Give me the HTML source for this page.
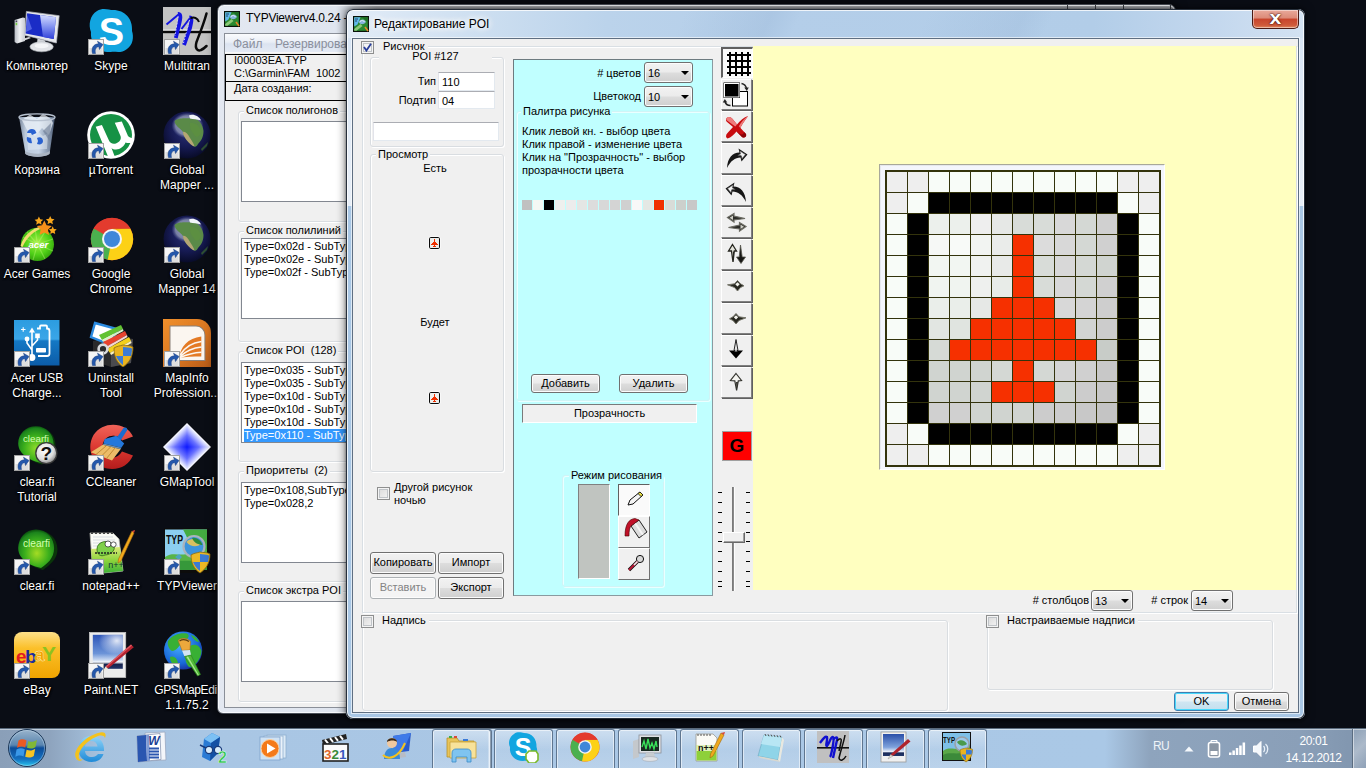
<!DOCTYPE html>
<html lang="ru">
<head>
<meta charset="utf-8">
<title>Редактирование POI</title>
<style>
*{box-sizing:border-box;margin:0;padding:0}
html,body{width:1366px;height:768px;overflow:hidden;background:#0a0d15}
body{position:relative;font-family:"Liberation Sans",sans-serif;font-size:11px;color:#000;line-height:13px}
.a{position:absolute}
.t{position:absolute;white-space:nowrap;line-height:13px;font-size:11px}
.r{text-align:right}
.c{text-align:center}
/* desktop icons */
.ico{position:absolute;width:76px;text-align:center;color:#fff;font-size:12px;line-height:15px;text-shadow:0 1px 2px #000,0 0 3px #000,1px 1px 1px #000;letter-spacing:0}
.ico svg{text-shadow:none;display:block;margin:0 auto 4px auto;width:48px;height:48px}
/* win controls */
.gb{position:absolute;border:1px solid #d9dde1;border-radius:3px;box-shadow:inset 1px 1px 0 #fff,1px 1px 0 #fff}
.gbl{position:absolute;background:#f0f0f0;padding:0 2px;white-space:nowrap;line-height:13px}
.inp{position:absolute;background:#fff;border:1px solid #e3e9ef;border-top-color:#abadb3;border-left-color:#e2e3ea;line-height:16px;padding:1px 0 0 3px}
.btn{position:absolute;border:1px solid #707070;border-radius:3px;background:linear-gradient(#f2f2f2 0,#ebebeb 48%,#dddddd 52%,#cfcfcf 100%);box-shadow:inset 0 0 0 1px #fcfcfc;text-align:center;line-height:19px;white-space:nowrap}
.btn.dis{color:#838383;border-color:#adb2b5;background:#f4f4f4}
.btn.def{border-color:#3c7fb1;box-shadow:inset 0 0 0 1px #48d8fb;background:linear-gradient(#f2f2f2 0,#e6f0f6 48%,#cfe6f2 52%,#c4dfee 100%)}
.cmb{position:absolute;border:1px solid #707070;border-radius:3px;background:linear-gradient(#f2f2f2 0,#ebebeb 48%,#dddddd 52%,#cfcfcf 100%);box-shadow:inset 0 0 0 1px #fcfcfc;line-height:20px;padding-left:3px}
.cmb:after{content:"";position:absolute;right:3px;top:8px;border:4px solid transparent;border-top:4px solid #000;border-bottom:none}
.chk{position:absolute;width:13px;height:13px;border:1px solid #8e8f8f;background:linear-gradient(135deg,#d8d8d8,#f6f6f6);box-shadow:inset 0 0 0 1px #f4f4f4,inset 0 0 0 2px #c0c4c8}
.lb{position:absolute;background:#fff;border:1px solid #828790;overflow:hidden;padding:1px 0 0 2px;white-space:nowrap;line-height:13px}
.tb{position:absolute;left:721px;width:31px;height:31px;background:#f0f0f0;border:1px solid;border-color:#fff #808080 #808080 #fff;box-shadow:1px 1px 0 #606060}
.tb svg{position:absolute;left:0;top:0;width:29px;height:29px}
.sw i{margin-right:1px}
.tk{position:absolute;height:40px;top:728px}
</style>
</head>
<body>
<!-- desktop icons -->
<div class="ico" style="left:-1px;top:7px"><svg viewBox="0 0 48 48"><defs><linearGradient id="cmpA1" x1="0" y1="0" x2="0" y2="1"><stop offset="0" stop-color="#d4dcff"/><stop offset=".5" stop-color="#8090f0"/><stop offset="1" stop-color="#3040d8"/></linearGradient><linearGradient id="cmpB1" x1="0" y1="0" x2="1" y2="0"><stop offset="0" stop-color="#b8bcc4"/><stop offset=".5" stop-color="#f0f2f4"/><stop offset="1" stop-color="#c8ccd2"/></linearGradient></defs><path d="M1.600 13 L10 10.500 L12 11 L12 34 L4 36.500 L1.600 35Z" fill="url(#cmpB1)"/><rect x="2.600" y="13.500" width="1.600" height="1.600" fill="#445"/><rect x="2.600" y="15.800" width="1.600" height="2.400" fill="#7c4"/><path d="M9 32 L16 30 L18 31 L10 34Z" fill="#d4d6da"/><path d="M13.400 4.400 L46.200 8.700 L43.400 36 L11.800 28.200Z" fill="#e6e8ec" stroke="#b4b8c0" stroke-width=".7"/><path d="M14.100 6.300 L43 10.200 L40.700 32.100 L12.600 26.600Z" fill="#1a2cc6"/><path d="M27 8 L43 10.200 L40.700 32.100 L30 30Z" fill="url(#cmpA1)"/><path d="M14.100 8 L19 22 L13 25Z" fill="#6a7af0" opacity=".7"/><path d="M24.500 31.500 L32 33.500 L33 38 L24 37Z" fill="#d0d3d8"/><ellipse cx="28.600" cy="39.800" rx="11.700" ry="5" fill="#e2e4e8" stroke="#b4b8be" stroke-width=".6"/><ellipse cx="28.600" cy="38.800" rx="7" ry="2.400" fill="#f4f5f7"/></svg>Компьютер</div>
<div class="ico" style="left:73px;top:7px"><svg viewBox="0 0 48 48"><path d="M10 4 C16 0 22 3 26 3 C38 3 46 12 45 24 C47 30 46 38 40 42 C34 47 28 44 24 45 C12 46 3 37 4 25 C1 18 3 8 10 4Z" fill="#12a5e0"/><text x="24.500" y="37.500" font-family="Liberation Sans,sans-serif" font-weight="bold" font-size="38" text-anchor="middle" fill="#fff">S</text><g><rect x="1.500" y="32.500" width="15" height="15" fill="#f6f6f6" stroke="#a2a2a2"/><rect x="2.500" y="41" width="13" height="6" fill="#dedede"/><path d="M5.500 46.500 C4 41 6.500 37 11.500 36.800 L10.500 34.200 L16 37.500 L12.500 42.500 L11.800 39.800 C9 40 7.500 42.500 8.500 46.500Z" fill="#2458ac" stroke="#183c7c" stroke-width=".5"/></g></svg>Skype</div>
<div class="ico" style="left:149px;top:7px"><svg viewBox="0 0 48 48"><rect x="0" y="0" width="48" height="48" fill="#c3c3c3"/><rect x="0" y="22.500" width="48" height="1.300" fill="#ececec"/><rect x="0" y="23.800" width="48" height="2.400" fill="#0a0a0a"/><path d="M3.500 17.500 L15.500 7.500" fill="none" stroke="#1414e0" stroke-width="2"/><path d="M15 7 C18.500 6.500 17.500 12 16 18 L12.800 31" fill="none" stroke="#1414e0" stroke-width="3.800" stroke-linejoin="round"/><path d="M18.500 22 L27 11" fill="none" stroke="#1414e0" stroke-width="2"/><path d="M26.500 10.500 C29.500 10 28.500 15 27 21 L21 38" fill="none" stroke="#1414e0" stroke-width="3.800" stroke-linejoin="round"/><path d="M15 9.500 L12 29 M26.500 13 L20.500 36" fill="none" stroke="#c8c8ff" stroke-width="1" stroke-dasharray="1.600 1.600"/><path d="M27.500 11.500 C31 9.500 34.500 11 36 15" fill="none" stroke="#0a0a0a" stroke-width="2"/><path d="M43.500 6.500 C41 16 37 26 33.500 35 C31.500 42 35 44.500 38 43 C40.500 42 42 40.500 43.500 39" fill="none" stroke="#0a0a0a" stroke-width="2.500" stroke-linecap="round"/><g><rect x="1.500" y="32.500" width="15" height="15" fill="#f6f6f6" stroke="#a2a2a2"/><rect x="2.500" y="41" width="13" height="6" fill="#dedede"/><path d="M5.500 46.500 C4 41 6.500 37 11.500 36.800 L10.500 34.200 L16 37.500 L12.500 42.500 L11.800 39.800 C9 40 7.500 42.500 8.500 46.500Z" fill="#2458ac" stroke="#183c7c" stroke-width=".5"/></g></svg>Multitran</div>
<div class="ico" style="left:-1px;top:111px"><svg viewBox="0 0 48 48"><defs><linearGradient id="binA4" x1="0" x2="1"><stop offset="0" stop-color="#7a889c"/><stop offset=".18" stop-color="#bccadc"/><stop offset=".55" stop-color="#c6d4e6"/><stop offset=".85" stop-color="#7c8ca4"/><stop offset="1" stop-color="#46546c"/></linearGradient></defs><path d="M6 6 L42 6 L36.500 43 C31 46.500 18 46.500 12.500 43 Z" fill="url(#binA4)"/><path d="M12.500 43 C18 46.500 31 46.500 36.500 43 L37 40 C31 43.500 18 43.500 12 40Z" fill="#aab4c2"/><path d="M9 9 L17 3.500 L24 8 L30 2.500 L38 8 L40 12 L36 24 L29 17 L22 25 L14 19Z" fill="#eef4fa" opacity=".7"/><path d="M14 22 L22 18 L30 25 L35 22 L34 38 L15 39Z" fill="#e6eef8" opacity=".5"/><path d="M30 20 L38 12 L36.500 30Z" fill="#6c7c94" opacity=".6"/><ellipse cx="24" cy="6.200" rx="18" ry="3.400" fill="none" stroke="#b8c2d0" stroke-width="1.300"/><path d="M14 22 C15 18 19 17 22 19 L23.500 22 L19 24 L18 22 Z M24 27 C27 25 30 27 30 30 C30 33 27 34 24 33 L25 30Z M14 26 L18 27 L19 32 C16 33 13 30 14 26Z" fill="#2a62d0"/></svg>Корзина</div>
<div class="ico" style="left:73px;top:111px"><svg viewBox="0 0 48 48"><circle cx="24" cy="24" r="23.800" fill="#fff"/><circle cx="24" cy="24" r="21" fill="#169245"/><path d="M8.700 15.700 L14.900 14.100 L21.500 28.600 C23 32.500 26 33.500 29 32.500 C33 31 34.500 28 33.500 25 L27.800 11.800 L34.800 10.600 L41 25 C42.500 26.500 44 27 45.800 27 L45 31.700 C42 32.500 40 32 38.500 31.500 C37.500 35 33 38.500 29 38.500 C27 38.500 25.500 38 24.500 37 L27.800 45.800 L20.800 45 Z" fill="#fff"/><g><rect x="1.500" y="32.500" width="15" height="15" fill="#f6f6f6" stroke="#a2a2a2"/><rect x="2.500" y="41" width="13" height="6" fill="#dedede"/><path d="M5.500 46.500 C4 41 6.500 37 11.500 36.800 L10.500 34.200 L16 37.500 L12.500 42.500 L11.800 39.800 C9 40 7.500 42.500 8.500 46.500Z" fill="#2458ac" stroke="#183c7c" stroke-width=".5"/></g></svg>µTorrent</div>
<div class="ico" style="left:149px;top:111px"><svg viewBox="0 0 48 48"><defs><radialGradient id="glbA6" cx=".5" cy=".4" r=".6"><stop offset="0" stop-color="#2c3278"/><stop offset=".6" stop-color="#161a52"/><stop offset="1" stop-color="#080b28"/></radialGradient><radialGradient id="glbB6" cx=".5" cy=".5" r=".5"><stop offset="0" stop-color="#a8b0cc" stop-opacity=".95"/><stop offset=".75" stop-color="#8890b0" stop-opacity=".85"/><stop offset="1" stop-color="#5860a0" stop-opacity="0"/></radialGradient></defs><circle cx="24" cy="24" r="23.500" fill="url(#glbA6)"/><ellipse cx="24.500" cy="14.500" rx="16" ry="13" fill="url(#glbB6)"/><path d="M11.500 10 C16 6 24 8 30 7 C36 8 40 14 40.500 20 C40.500 26 38 30 35 33 C33 37 31 36 28 33 C24 30 21 26 20 21 C17 17 12 15 11.500 10Z" fill="#5a8a48"/><path d="M27 12 C32 11 37 15 38 21 C37 25 34 27 32 25 C29 21 26 17 27 12Z" fill="#5c9040" opacity=".8"/><path d="M20 21 C22 20 25 23 27 27 C29 30 31 33 31.500 35.500 C29 35 26 32 23.500 29 C21.500 26 20 24 20 21Z" fill="#b4a674"/><path d="M26 4.500 C30 2.500 36 5 38 9.500 C34 8.500 30 8 27 7.500Z" fill="#f2f6fa"/><path d="M38 38 L45 31 L44 35 L39 40Z" fill="#3c6a30" opacity=".7"/><g><rect x="1.500" y="32.500" width="15" height="15" fill="#f6f6f6" stroke="#a2a2a2"/><rect x="2.500" y="41" width="13" height="6" fill="#dedede"/><path d="M5.500 46.500 C4 41 6.500 37 11.500 36.800 L10.500 34.200 L16 37.500 L12.500 42.500 L11.800 39.800 C9 40 7.500 42.500 8.500 46.500Z" fill="#2458ac" stroke="#183c7c" stroke-width=".5"/></g></svg>Global<br>Mapper ...</div>
<div class="ico" style="left:-1px;top:215px"><svg viewBox="0 0 48 48"><defs><radialGradient id="acgA7" cx=".5" cy=".45" r=".6"><stop offset="0" stop-color="#a8f044"/><stop offset=".6" stop-color="#50d018"/><stop offset="1" stop-color="#2c9808"/></radialGradient></defs><circle cx="24.400" cy="29.300" r="16.600" fill="url(#acgA7)"/><path d="M24.400 29.300 L10 22 M24.400 29.300 L14 17 M24.400 29.300 L22 13 M24.400 29.300 L33 15 M24.400 29.300 L40 24 M24.400 29.300 L40 36 M24.400 29.300 L32 44 M24.400 29.300 L20 45 M24.400 29.300 L10 38" stroke="#c8ff80" stroke-width="1.200" opacity=".35"/><path d="M7.500 31 C11 20 19 13.500 28 11.500 L29 13.500 C21 16 14 22 9.500 32Z" fill="#f2dc70"/><path d="M25.900 1.500 l1.300 2.800 3 .4-2.200 2.100.6 3-2.700-1.500-2.700 1.500.6-3-2.200-2.100 3-.4Z M37.200 1 l1.300 2.800 3 .4-2.200 2.100.6 3-2.700-1.500-2.700 1.500.6-3-2.200-2.100 3-.4Z M39.700 11.300 l1.200 2.600 2.800.4-2 2 .5 2.800-2.500-1.400-2.500 1.400.5-2.800-2-2 2.800-.4Z" fill="#f8a61c"/><path d="M31.300 5.500 l2.300 4.800 5.200.7-3.800 3.700 1 5.200-4.700-2.500-4.700 2.500 1-5.200-3.800-3.700 5.200-.7Z" fill="#f8901a"/><text x="25.400" y="33" font-family="Liberation Sans,sans-serif" font-style="italic" font-weight="bold" font-size="8.500" text-anchor="middle" fill="#fff" textLength="20" lengthAdjust="spacingAndGlyphs">acer</text><g><rect x="1.500" y="32.500" width="15" height="15" fill="#f6f6f6" stroke="#a2a2a2"/><rect x="2.500" y="41" width="13" height="6" fill="#dedede"/><path d="M5.500 46.500 C4 41 6.500 37 11.500 36.800 L10.500 34.200 L16 37.500 L12.500 42.500 L11.800 39.800 C9 40 7.500 42.500 8.500 46.500Z" fill="#2458ac" stroke="#183c7c" stroke-width=".5"/></g></svg>Acer Games</div>
<div class="ico" style="left:73px;top:215px"><svg viewBox="0 0 48 48"><g transform="translate(1,0)"><circle cx="24" cy="24" r="21.200" fill="#e33b2e"/><path d="M24 24 L5.700 13.400 A21.200 21.200 0 0 0 19.700 44.800 L31 30Z" fill="#4bb04f"/><path d="M24 24 L19.700 44.800 A21.200 21.200 0 0 0 42.300 13.400 L24 13.400Z" fill="#fcd116"/><path d="M5.700 13.400 A21.200 21.200 0 0 1 42.300 13.400 L24 13.400 Z" fill="#e33b2e"/><path d="M24 13.400 L42.300 13.400 L24 14.600Z" fill="#c7301f" opacity=".6"/><circle cx="24" cy="24" r="10" fill="#f4f4f4"/><circle cx="24" cy="24" r="8" fill="#3f87d9"/></g><g><rect x="1.500" y="32.500" width="15" height="15" fill="#f6f6f6" stroke="#a2a2a2"/><rect x="2.500" y="41" width="13" height="6" fill="#dedede"/><path d="M5.500 46.500 C4 41 6.500 37 11.500 36.800 L10.500 34.200 L16 37.500 L12.500 42.500 L11.800 39.800 C9 40 7.500 42.500 8.500 46.500Z" fill="#2458ac" stroke="#183c7c" stroke-width=".5"/></g></svg>Google<br>Chrome</div>
<div class="ico" style="left:149px;top:215px"><svg viewBox="0 0 48 48"><defs><radialGradient id="glbA9" cx=".5" cy=".4" r=".6"><stop offset="0" stop-color="#2c3278"/><stop offset=".6" stop-color="#161a52"/><stop offset="1" stop-color="#080b28"/></radialGradient><radialGradient id="glbB9" cx=".5" cy=".5" r=".5"><stop offset="0" stop-color="#a8b0cc" stop-opacity=".95"/><stop offset=".75" stop-color="#8890b0" stop-opacity=".85"/><stop offset="1" stop-color="#5860a0" stop-opacity="0"/></radialGradient></defs><circle cx="24" cy="24" r="23.500" fill="url(#glbA9)"/><ellipse cx="24.500" cy="14.500" rx="16" ry="13" fill="url(#glbB9)"/><path d="M11.500 10 C16 6 24 8 30 7 C36 8 40 14 40.500 20 C40.500 26 38 30 35 33 C33 37 31 36 28 33 C24 30 21 26 20 21 C17 17 12 15 11.500 10Z" fill="#5a8a48"/><path d="M27 12 C32 11 37 15 38 21 C37 25 34 27 32 25 C29 21 26 17 27 12Z" fill="#5c9040" opacity=".8"/><path d="M20 21 C22 20 25 23 27 27 C29 30 31 33 31.500 35.500 C29 35 26 32 23.500 29 C21.500 26 20 24 20 21Z" fill="#b4a674"/><path d="M26 4.500 C30 2.500 36 5 38 9.500 C34 8.500 30 8 27 7.500Z" fill="#f2f6fa"/><path d="M38 38 L45 31 L44 35 L39 40Z" fill="#3c6a30" opacity=".7"/><g><rect x="1.500" y="32.500" width="15" height="15" fill="#f6f6f6" stroke="#a2a2a2"/><rect x="2.500" y="41" width="13" height="6" fill="#dedede"/><path d="M5.500 46.500 C4 41 6.500 37 11.500 36.800 L10.500 34.200 L16 37.500 L12.500 42.500 L11.800 39.800 C9 40 7.500 42.500 8.500 46.500Z" fill="#2458ac" stroke="#183c7c" stroke-width=".5"/></g></svg>Global<br>Mapper 14</div>
<div class="ico" style="left:-1px;top:319px"><svg viewBox="0 0 48 48"><defs><linearGradient id="usbA10" x1="0" y1="0" x2="0" y2="1"><stop offset="0" stop-color="#2c9ce0"/><stop offset=".42" stop-color="#3aa6e8"/><stop offset=".46" stop-color="#1478c4"/><stop offset="1" stop-color="#0c5ca8"/></linearGradient></defs><rect x="1" y="1" width="45.500" height="45.500" fill="url(#usbA10)"/><path d="M24 9.500 h3 v-2 a1 1 0 0 1 1 -1 h5 a1 1 0 0 1 1 1 v2 h0 a2.500 2.500 0 0 1 2.500 2.500 v22.500 a2.500 2.500 0 0 1 -2.500 2.500 h-9" fill="none" stroke="#fff" stroke-width="1.800"/><rect x="23" y="29" width="10" height="4.500" rx=".8" fill="#fff"/><path d="M19 37 L19 12 M19 31 L14 24 L14 21 M19 27 L24.500 21 L24.500 19" fill="none" stroke="#fff" stroke-width="1.600"/><path d="M19 8.500 l3 5 h-6Z" fill="#fff"/><circle cx="14" cy="20" r="2.400" fill="#fff"/><rect x="22.200" y="14.500" width="4.600" height="4.600" fill="#fff"/><circle cx="19" cy="38.500" r="3.400" fill="#fff"/><path d="M8 10.500 h4.500 M10.200 8.200 v4.600" stroke="#fff" stroke-width="1.100"/><g><rect x="1.500" y="32.500" width="15" height="15" fill="#f6f6f6" stroke="#a2a2a2"/><rect x="2.500" y="41" width="13" height="6" fill="#dedede"/><path d="M5.500 46.500 C4 41 6.500 37 11.500 36.800 L10.500 34.200 L16 37.500 L12.500 42.500 L11.800 39.800 C9 40 7.500 42.500 8.500 46.500Z" fill="#2458ac" stroke="#183c7c" stroke-width=".5"/></g></svg>Acer USB<br>Charge...</div>
<div class="ico" style="left:73px;top:319px"><svg viewBox="0 0 48 48"><path d="M6 22 L30 16 L46 20 L44 44 L24 48 L6 42Z" fill="#2a2a2c"/><path d="M24 27 L46 20 L44 44 L24 48Z" fill="#4a4a4e"/><path d="M8 4 L30 10 L24 26 L4 18Z" fill="#fff" stroke="#2a8ae0" stroke-width="2.4"/><path d="M12 16 L34 6 L36 10 L15 21Z" fill="#62c232"/><path d="M15 21 L36 10 L36.5 12 L16 23Z" fill="#d9f0c8"/><path d="M16 23 L38 12 L40 16 L19 28Z" fill="#e8432e"/><path d="M19 28 L40 16 L40.5 18 L20 30Z" fill="#f8d6d0"/><path d="M20 30 L42 18 L44 22 L23 34Z" fill="#f2cf1c"/><path d="M23 34 L44 22 L44.5 24 L24 36Z" fill="#fbf2c0"/><circle cx="16" cy="30" r="4.4" fill="none" stroke="#d8dade" stroke-width="2.6"/><path d="M36 26 C40 27 43 26 46 28 C46 38 42 44 36 48 C30 44 27 38 27 29 C30 27 33 27 36 26Z" fill="#e9b320" stroke="#8a6a12" stroke-width=".8"/><path d="M36 28 V46 C31 42 29 37 29 37 H36Z M36 37 H44 C45 33 45 30 45 29.5 C42 28 39 28.5 36 28Z" fill="#3b7bd4"/><g><rect x="1.500" y="32.500" width="15" height="15" fill="#f6f6f6" stroke="#a2a2a2"/><rect x="2.500" y="41" width="13" height="6" fill="#dedede"/><path d="M5.500 46.500 C4 41 6.500 37 11.500 36.800 L10.500 34.200 L16 37.500 L12.500 42.500 L11.800 39.800 C9 40 7.500 42.500 8.500 46.500Z" fill="#2458ac" stroke="#183c7c" stroke-width=".5"/></g></svg>Uninstall<br>Tool</div>
<div class="ico" style="left:149px;top:319px"><svg viewBox="0 0 48 48"><defs><linearGradient id="miA12" x1="0" y1="0" x2="1" y2="1"><stop offset="0" stop-color="#f0902c"/><stop offset=".6" stop-color="#d87420"/><stop offset="1" stop-color="#b45a18"/></linearGradient></defs><path d="M0 0 H34 A14 14 0 0 1 48 14 V48 H0Z" fill="url(#miA12)"/><path d="M6.500 6.500 H33 A9.400 9.400 0 0 1 42.400 16 V42 H6.500Z" fill="#8a8078"/><path d="M7.500 7.500 H33 A8.400 8.400 0 0 1 41.400 16 V41 H7.500Z" fill="#fbf6f0"/><path d="M16.400 38.800 C17 28 25 19 38.300 17.500 L38.300 37.500 C30 37.500 22 38 16.400 38.800Z" fill="#e47a24"/><path d="M17 36 C22 28 30 23.500 38.500 22.500 M17 37.500 C23 32 31 28.800 38.500 28 M17 38.500 C24 35.500 31 33.800 38.500 33.300" fill="none" stroke="#fbf6f0" stroke-width="1.500"/><g><rect x="1.500" y="32.500" width="15" height="15" fill="#f6f6f6" stroke="#a2a2a2"/><rect x="2.500" y="41" width="13" height="6" fill="#dedede"/><path d="M5.500 46.500 C4 41 6.500 37 11.500 36.800 L10.500 34.200 L16 37.500 L12.500 42.500 L11.800 39.800 C9 40 7.500 42.500 8.500 46.500Z" fill="#2458ac" stroke="#183c7c" stroke-width=".5"/></g></svg>MapInfo<br>Profession...</div>
<div class="ico" style="left:-1px;top:423px"><svg viewBox="0 0 48 48"><defs><radialGradient id="cfA13" cx=".5" cy=".6" r=".6"><stop offset="0" stop-color="#8edc2c"/><stop offset=".55" stop-color="#3cb01c"/><stop offset=".9" stop-color="#1c841c"/><stop offset="1" stop-color="#0e5a10"/></radialGradient><radialGradient id="cfQ13" cx=".4" cy=".35" r=".75"><stop offset="0" stop-color="#fff"/><stop offset=".6" stop-color="#dcdcdc"/><stop offset="1" stop-color="#6a6a6a"/></radialGradient></defs><path d="M24.500 4.500 C35 4.500 42.500 12 42.500 22 C42.500 32 34 37 29 41.500 C20 39 7 33 7 21.500 C7 12 14 4.500 24.500 4.500Z" fill="#0a360a"/><path d="M23 3.200 C33.500 3.200 40.600 11 40.600 21 C40.600 31 33 36 28 40 C19 38 5.200 32 5.200 20.500 C5.200 11 12.500 3.200 23 3.200Z" fill="url(#cfA13)"/><text x="23" y="18.500" font-family="Liberation Sans,sans-serif" font-size="9.500" text-anchor="middle" fill="#d4ffb0" textLength="26" lengthAdjust="spacingAndGlyphs">clearfi</text><circle cx="33.300" cy="30.200" r="10.500" fill="url(#cfQ13)" stroke="#3a3a3a" stroke-width="1.300"/><text x="33.300" y="37.300" font-family="Liberation Sans,sans-serif" font-weight="bold" font-size="19" text-anchor="middle" fill="#111">?</text><g><rect x="1.500" y="32.500" width="15" height="15" fill="#f6f6f6" stroke="#a2a2a2"/><rect x="2.500" y="41" width="13" height="6" fill="#dedede"/><path d="M5.500 46.500 C4 41 6.500 37 11.500 36.800 L10.500 34.200 L16 37.500 L12.500 42.500 L11.800 39.800 C9 40 7.500 42.500 8.500 46.500Z" fill="#2458ac" stroke="#183c7c" stroke-width=".5"/></g></svg>clear.fi<br>Tutorial</div>
<div class="ico" style="left:73px;top:423px"><svg viewBox="0 0 48 48"><defs><linearGradient id="ccA14" x1="0" y1="0" x2="0" y2="1"><stop offset="0" stop-color="#f0645a"/><stop offset=".5" stop-color="#dc3a32"/><stop offset="1" stop-color="#b41c1c"/></linearGradient></defs><path d="M46 13.500 C40 -1 16 -3 6.500 12 C-2 27 7 46 25 46 C35 46 42 41 46 32.500 L35 28.500 C32 34 26 36 21 33.500 C13 29 14 17 22 13.500 C27 11.500 32 13 35 17.500Z" fill="url(#ccA14)"/><path d="M22 13.500 C27 11.500 32 13 35 17.500 L33 18.500 C30 15 26 14 22 15.500Z" fill="#1a0a0a" opacity=".6"/><path d="M36.500 5 C38.500 3.500 41 5 40 7.500 L33.500 17.500 L29.500 15Z" fill="#1c6cd0"/><path d="M17.600 16.100 L29.300 12.700 L37.200 20.500 L34.300 24.800 L16.600 20.500Z" fill="#2478dc"/><path d="M16.600 20.500 L34.300 24.800 L33.600 26.200 L15.800 21.800Z" fill="#6a90b4"/><path d="M15.800 21.800 L33.600 26.200 L25 37.500 L3.800 29.300Z" fill="#ecbc68"/><path d="M19 23 L9 31.500 M23.500 24 L14 33.500 M28 25 L19.500 35.500" stroke="#c08a34" stroke-width="1"/><g><rect x="1.500" y="32.500" width="15" height="15" fill="#f6f6f6" stroke="#a2a2a2"/><rect x="2.500" y="41" width="13" height="6" fill="#dedede"/><path d="M5.500 46.500 C4 41 6.500 37 11.500 36.800 L10.500 34.200 L16 37.500 L12.500 42.500 L11.800 39.800 C9 40 7.500 42.500 8.500 46.500Z" fill="#2458ac" stroke="#183c7c" stroke-width=".5"/></g></svg>CCleaner</div>
<div class="ico" style="left:149px;top:423px"><svg viewBox="0 0 48 48"><defs><linearGradient id="gmtA15" gradientUnits="userSpaceOnUse" x1="24" y1="24" x2="36" y2="12"><stop offset="0" stop-color="#0c18ff"/><stop offset=".5" stop-color="#6a72ff"/><stop offset=".85" stop-color="#d4d8ff"/><stop offset="1" stop-color="#fff"/></linearGradient><linearGradient id="gmtB15" gradientUnits="userSpaceOnUse" x1="24" y1="24" x2="36" y2="36"><stop offset="0" stop-color="#0c18ff"/><stop offset=".5" stop-color="#6a72ff"/><stop offset=".85" stop-color="#d4d8ff"/><stop offset="1" stop-color="#fff"/></linearGradient><linearGradient id="gmtC15" gradientUnits="userSpaceOnUse" x1="24" y1="24" x2="12" y2="36"><stop offset="0" stop-color="#0c18ff"/><stop offset=".5" stop-color="#6a72ff"/><stop offset=".85" stop-color="#d4d8ff"/><stop offset="1" stop-color="#fff"/></linearGradient><linearGradient id="gmtD15" gradientUnits="userSpaceOnUse" x1="24" y1="24" x2="12" y2="12"><stop offset="0" stop-color="#0c18ff"/><stop offset=".5" stop-color="#6a72ff"/><stop offset=".85" stop-color="#d4d8ff"/><stop offset="1" stop-color="#fff"/></linearGradient></defs><path d="M24 24 L24 0 L48 24Z" fill="url(#gmtA15)"/><path d="M24 24 L48 24 L24 48Z" fill="url(#gmtB15)"/><path d="M24 24 L24 48 L0 24Z" fill="url(#gmtC15)"/><path d="M24 24 L0 24 L24 0Z" fill="url(#gmtD15)"/><g><rect x="1.500" y="32.500" width="15" height="15" fill="#f6f6f6" stroke="#a2a2a2"/><rect x="2.500" y="41" width="13" height="6" fill="#dedede"/><path d="M5.500 46.500 C4 41 6.500 37 11.500 36.800 L10.500 34.200 L16 37.500 L12.500 42.500 L11.800 39.800 C9 40 7.500 42.500 8.500 46.500Z" fill="#2458ac" stroke="#183c7c" stroke-width=".5"/></g></svg>GMapTool</div>
<div class="ico" style="left:-1px;top:527px"><svg viewBox="0 0 48 48"><defs><radialGradient id="cf2A16" cx=".52" cy=".62" r=".6"><stop offset="0" stop-color="#a4dc24"/><stop offset=".55" stop-color="#3cb01c"/><stop offset=".9" stop-color="#1c841c"/><stop offset="1" stop-color="#0e5a10"/></radialGradient></defs><path d="M25 3.500 C36.500 3.500 44.500 12 44.500 22.500 C44.500 33 35.500 38.500 30 43 C20 40 7.500 34 7.500 22 C7.500 12 14.500 3.500 25 3.500Z" fill="#0a360a"/><path d="M23 2.400 C34 2.400 41.100 11 41.100 21 C41.100 32 33.500 37 28 41 C18.500 39 5.200 33 5.200 21 C5.200 11 12.500 2.400 23 2.400Z" fill="url(#cf2A16)"/><text x="23.500" y="19.500" font-family="Liberation Sans,sans-serif" font-size="10" text-anchor="middle" fill="#d4ffb0" textLength="27" lengthAdjust="spacingAndGlyphs">clearfi</text><g><rect x="1.500" y="32.500" width="15" height="15" fill="#f6f6f6" stroke="#a2a2a2"/><rect x="2.500" y="41" width="13" height="6" fill="#dedede"/><path d="M5.500 46.500 C4 41 6.500 37 11.500 36.800 L10.500 34.200 L16 37.500 L12.500 42.500 L11.800 39.800 C9 40 7.500 42.500 8.500 46.500Z" fill="#2458ac" stroke="#183c7c" stroke-width=".5"/></g></svg>clear.fi</div>
<div class="ico" style="left:73px;top:527px"><svg viewBox="0 0 48 48"><defs><linearGradient id="nppA17" x1="0" y1="0" x2="0" y2="1"><stop offset="0" stop-color="#dcea78"/><stop offset=".5" stop-color="#8cd43c"/><stop offset="1" stop-color="#38b038"/></linearGradient></defs><path d="M3 6 H26 L32 12 L36 44 L6 47Z" fill="#fbfbf6" stroke="#b8b8b0" stroke-width=".8"/><path d="M4 22 L33 20 L36 44 L6 47Z" fill="url(#nppA17)"/><path d="M4 6 h2 m2 0 h2 m2 0 h2 m2 0 h2 m2 0 h2 m2 0 h2" stroke="#444" stroke-width="2"/><path d="M6 10 H26 M6 13 H28 M6 16 H30 M6 19 H31" stroke="#c8d0d8" stroke-width=".7"/><path d="M10 22 C10 14 22 12 26 18 C30 22 24 28 18 28 C14 30 10 28 10 22Z" fill="#7fd04a" stroke="#2a6a10" stroke-width=".8"/><circle cx="21" cy="17" r="3" fill="#fff" stroke="#222" stroke-width=".7"/><circle cx="26.5" cy="17.5" r="2.6" fill="#fff" stroke="#222" stroke-width=".7"/><path d="M8 26 H30" stroke="#222" stroke-width="1.6" stroke-dasharray="2 1"/><text x="29" y="41" font-family="Liberation Sans,sans-serif" font-size="9" text-anchor="middle" fill="#133">n++</text><path d="M45 4 L47 6 L34 34 L31 36 L31.5 32Z" fill="#f0a81c" stroke="#a86a10" stroke-width=".6"/><path d="M45 4 l2 2 1-3Z" fill="#d8463a"/><g><rect x="1.500" y="32.500" width="15" height="15" fill="#f6f6f6" stroke="#a2a2a2"/><rect x="2.500" y="41" width="13" height="6" fill="#dedede"/><path d="M5.500 46.500 C4 41 6.500 37 11.500 36.800 L10.500 34.200 L16 37.500 L12.500 42.500 L11.800 39.800 C9 40 7.500 42.500 8.500 46.500Z" fill="#2458ac" stroke="#183c7c" stroke-width=".5"/></g></svg>notepad++</div>
<div class="ico" style="left:149px;top:527px"><svg viewBox="0 0 48 48"><rect x="1" y="1" width="45" height="45" fill="#0c0c0c"/><rect x="2" y="2.500" width="42" height="40.500" fill="#8ccff0"/><path d="M20 2.500 H44 V24 C38 20 30 24 26 16 C24 10 22 6 20 2.500Z" fill="#44ac40"/><path d="M2 30 C10 24 18 30 26 26 C32 22 40 24 44 22 V43 H2Z" fill="#58b448"/><path d="M2 36 C14 30 22 38 44 30 V43 H2Z" fill="#36983a"/><path d="M12 30 l4 -3 3 3 -3 3Z M6 34 l5 -2 2 4 -5 2Z" fill="#4aa0e0" opacity=".8"/><text x="11.500" y="17" font-family="Liberation Sans,sans-serif" font-weight="bold" font-size="13" text-anchor="middle" fill="#0a0a0a" textLength="17" lengthAdjust="spacingAndGlyphs">TYP</text><circle cx="31" cy="19.500" r="10.500" fill="#3c94dc" stroke="#aab4bc" stroke-width="2.200"/><path d="M23.500 15 C27 10.500 35 11.500 38.500 16 C36 20 28 21 23.500 15Z" fill="#d8c060"/><path d="M29 11 C33 10 38 13 39.500 18 C36 18 31 16 29 11Z" fill="#2c8c3c"/><path d="M37 25 C41 26 44 25 47 27 C47 36 43 42 37 46 C31 42 28 36 28 28 C31 26 34 26 37 25Z" fill="#ecb824" stroke="#8a6a12" stroke-width=".8"/><path d="M37 27 V44 C32 40 30 35 30 35 H37Z M37 35 H45 C46 32 46 29 46 28.500 C43 27 40 27.500 37 27Z" fill="#3b7bd4"/><g><rect x="1.500" y="32.500" width="15" height="15" fill="#f6f6f6" stroke="#a2a2a2"/><rect x="2.500" y="41" width="13" height="6" fill="#dedede"/><path d="M5.500 46.500 C4 41 6.500 37 11.500 36.800 L10.500 34.200 L16 37.500 L12.500 42.500 L11.800 39.800 C9 40 7.500 42.500 8.500 46.500Z" fill="#2458ac" stroke="#183c7c" stroke-width=".5"/></g></svg>TYPViewer</div>
<div class="ico" style="left:-1px;top:631px"><svg viewBox="0 0 48 48"><defs><linearGradient id="ebA19" x1="0" y1="0" x2="0" y2="1"><stop offset="0" stop-color="#fde08a"/><stop offset=".35" stop-color="#fbc02a"/><stop offset="1" stop-color="#f0a400"/></linearGradient></defs><rect x="1" y="1" width="46" height="46" rx="8" fill="url(#ebA19)"/><text x="3" y="32" font-family="Liberation Sans,sans-serif" font-weight="bold" font-size="19" fill="#e21a22" letter-spacing="-2">e</text><text x="12" y="32" font-family="Liberation Sans,sans-serif" font-weight="bold" font-size="19" fill="#1b2d9c">b</text><text x="21" y="30" font-family="Liberation Sans,sans-serif" font-weight="bold" font-size="19" fill="#f2a200" stroke="#fff3c8" stroke-width=".4">a</text><text x="29" y="30" font-family="Liberation Sans,sans-serif" font-weight="bold" font-size="21" fill="#8cc220">Y</text><g><rect x="1.500" y="32.500" width="15" height="15" fill="#f6f6f6" stroke="#a2a2a2"/><rect x="2.500" y="41" width="13" height="6" fill="#dedede"/><path d="M5.500 46.500 C4 41 6.500 37 11.500 36.800 L10.500 34.200 L16 37.500 L12.500 42.500 L11.800 39.800 C9 40 7.500 42.500 8.500 46.500Z" fill="#2458ac" stroke="#183c7c" stroke-width=".5"/></g></svg>eBay</div>
<div class="ico" style="left:73px;top:631px"><svg viewBox="0 0 48 48"><defs><linearGradient id="pnA20" x1="0" y1="0" x2="0" y2="1"><stop offset="0" stop-color="#2c54b8"/><stop offset=".55" stop-color="#6c94d8"/><stop offset=".74" stop-color="#c8d8f0"/><stop offset=".8" stop-color="#f4f8fc"/><stop offset=".87" stop-color="#16244e"/><stop offset="1" stop-color="#22346a"/></linearGradient><radialGradient id="pnB20" cx=".8" cy=".25" r=".6"><stop offset="0" stop-color="#fff" stop-opacity=".85"/><stop offset=".6" stop-color="#dce6f6" stop-opacity=".4"/><stop offset="1" stop-color="#fff" stop-opacity="0"/></radialGradient></defs><rect x="2.400" y="1.400" width="36.300" height="45" fill="#ececec" stroke="#c4c4c4" stroke-width=".8"/><rect x="5.800" y="3.800" width="30" height="34" fill="url(#pnA20)"/><rect x="5.800" y="3.800" width="30" height="24" fill="url(#pnB20)"/><path d="M44 13.500 L46.800 16.300 L21 37.500 L18.500 35.500Z" fill="#b4222e"/><path d="M44 13.500 L45 14.500 L19.500 36.300 L18.500 35.500Z" fill="#e05a64"/><path d="M18.500 35.500 L21 37.500 L15.500 41Z" fill="#f0e8d8"/><g><rect x="1.500" y="32.500" width="15" height="15" fill="#f6f6f6" stroke="#a2a2a2"/><rect x="2.500" y="41" width="13" height="6" fill="#dedede"/><path d="M5.500 46.500 C4 41 6.500 37 11.500 36.800 L10.500 34.200 L16 37.500 L12.500 42.500 L11.800 39.800 C9 40 7.500 42.500 8.500 46.500Z" fill="#2458ac" stroke="#183c7c" stroke-width=".5"/></g></svg>Paint.NET</div>
<div class="ico" style="left:149px;top:631px"><svg viewBox="0 0 48 48"><defs><radialGradient id="gpA21" cx=".4" cy=".35" r=".7"><stop offset="0" stop-color="#4ab0ff"/><stop offset=".7" stop-color="#1868d8"/><stop offset="1" stop-color="#1a2a98"/></radialGradient></defs><circle cx="20.100" cy="19.500" r="19.100" fill="url(#gpA21)"/><path d="M5 10 C9 4 17 1.500 24 2.500 C28 5 24 9 20 11 C16 14 14 20 9 20 C6 18 4 14 5 10Z M24 18 C28 12 36 12 38.500 20 C38 28 32 36 26 36 C22 32 21 24 24 18Z M7 26 C11 24 16 28 15 36 C10 34 7 31 7 26Z M28 4 C32 5 35 8 36 11 C33 11 30 8 28 4Z" fill="#38b034"/><path d="M15 9.500 C18 6 25 7 27.500 10.500 L27 19 L19 19.500Z" fill="#eca83c" stroke="#9c6c24" stroke-width=".6"/><path d="M16.500 10 C19 8.500 23 8.500 26 10.500" stroke="#5a3c14" stroke-width="1.200" fill="none"/><path d="M19 19.500 L27 19 L28 24 L21.500 25.500Z" fill="#d4e4f4"/><path d="M21.500 25.500 L28 24 L37.500 43.500 L34.500 45Z" fill="#50b838" stroke="#2a7a1c" stroke-width=".6"/><path d="M23.500 26 L25 25.600 L35.800 44 L35 44.500Z" fill="#a8e890"/><g><rect x="1.500" y="32.500" width="15" height="15" fill="#f6f6f6" stroke="#a2a2a2"/><rect x="2.500" y="41" width="13" height="6" fill="#dedede"/><path d="M5.500 46.500 C4 41 6.500 37 11.500 36.800 L10.500 34.200 L16 37.500 L12.500 42.500 L11.800 39.800 C9 40 7.500 42.500 8.500 46.500Z" fill="#2458ac" stroke="#183c7c" stroke-width=".5"/></g></svg><span style="letter-spacing:-.4px">GPSMapEdit</span><br>1.1.75.2</div>
<!-- back window: TYPViewer (inactive) -->
<div class="a" style="left:212px;top:0;width:972px;height:722px;border-radius:12px;background:radial-gradient(closest-side,rgba(0,0,0,.0),rgba(0,0,0,0));box-shadow:none"></div>
<div class="a" id="bw" style="left:217px;top:4px;width:959px;height:710px;border-radius:7px 7px 6px 6px;border:1px solid #4a4f58;background:linear-gradient(90deg,#e3e8f1 0,#dfe5ef 118px,rgba(223,229,239,0) 158px),linear-gradient(#b6b9bd 0,#7d8085 6px,#8b8e93 7px);box-shadow:inset 0 0 0 1px #f6f8fb,0 0 10px 2px rgba(0,0,0,.55)">
  <!-- top strip caption buttons seen above dialog -->
  <div class="a" style="left:849px;top:0;width:1px;height:6px;background:#3c3f44"></div>
  <div class="a" style="left:877px;top:0;width:1px;height:6px;background:#3c3f44"></div>
  <div class="a" style="left:905px;top:0;width:1px;height:6px;background:#3c3f44"></div>
  <div class="a" style="left:952px;top:0;width:1px;height:6px;background:#3c3f44"></div>
  <!-- title -->
  <svg class="a" style="left:6px;top:6px" width="16" height="16" viewBox="0 0 16 16"><rect width="16" height="16" fill="#081208"/><rect x="1.200" y="1.200" width="13.600" height="13.600" fill="#2a8a30"/><path d="M1.200 1.200 H7.500 L4.500 8.500 L1.200 10.500Z" fill="#62b8ec"/><path d="M2 3 h3 M2 5 h2" stroke="#143a5c" stroke-width=".9"/><path d="M5.500 6 C8 2.500 12 3 13 6 C10.500 9 7.500 9 5.500 6Z" fill="#86b4dc"/><path d="M7 5.500 C8.500 4 11 4.500 11.500 6" stroke="#e8f0f8" stroke-width="1" fill="none"/><path d="M1.200 13 L7.500 8 L9.500 10 L3.500 14.800 H1.200Z" fill="#8cc878"/><path d="M9 1.200 H14.800 V6 Z" fill="#1c6c24"/><path d="M12 11 L15 15" stroke="#e8862a" stroke-width="1.600"/></svg>
  <div class="t" style="left:28px;top:5px;font-size:12px;line-height:16px;color:#000;letter-spacing:-0.3px">TYPViewerv4.0.24 -</div>
  <!-- client -->
  <div class="a" id="bwc" style="left:6px;top:28px;width:945px;height:675px;background:#f0f0f0;border:1px solid #8a8f98;overflow:hidden">
    <div class="a" style="left:0;top:0;width:945px;height:19px;background:linear-gradient(#fafbfd 0,#e9eef6 45%,#dbe3f0 55%,#e4eaf4 100%);border-bottom:1px solid #f8f8f8"></div>
    <div class="t" style="left:8px;top:2px;font-size:12px;line-height:16px;color:#8a8f9c">Файл</div>
    <div class="t" style="left:50px;top:2px;font-size:12px;line-height:16px;color:#8a8f9c">Резервирование</div>
    <div class="a" style="left:0;top:20px;width:945px;height:28px;border:1px solid #000;border-bottom:none"></div>
    <div class="a" style="left:0;top:47px;width:945px;height:20px;border:1px solid #000"></div>
    <div class="t" style="left:9px;top:20px">I00003EA.TYP</div>
    <div class="t" style="left:9px;top:33px">C:\Garmin\FAM&nbsp; 1002</div>
    <div class="t" style="left:9px;top:48px">Дата создания:</div>
    <!-- group boxes -->
    <div class="gb" style="left:13px;top:77px;width:300px;height:111px"></div>
    <div class="gbl" style="left:19px;top:70px">Список полигонов</div>
    <div class="lb" style="left:16px;top:87px;width:290px;height:81px"></div>

    <div class="gb" style="left:13px;top:197px;width:300px;height:111px"></div>
    <div class="gbl" style="left:19px;top:190px">Список полилиний</div>
    <div class="lb" style="left:16px;top:204px;width:290px;height:81px">Type=0x02d - SubType=0x00<br>Type=0x02e - SubType=0x00<br>Type=0x02f - SubType=0x00</div>

    <div class="gb" style="left:13px;top:317px;width:300px;height:111px"></div>
    <div class="gbl" style="left:19px;top:310px">Список POI&nbsp; (128)</div>
    <div class="lb" style="left:16px;top:328px;width:290px;height:81px">Type=0x035 - SubType=0x01<br>Type=0x035 - SubType=0x02<br>Type=0x10d - SubType=0x01<br>Type=0x10d - SubType=0x02<br>Type=0x10d - SubType=0x03<br><span style="display:inline-block;width:300px;background:#3399ff;color:#fff">Type=0x110 - SubType=0x04</span></div>

    <div class="gb" style="left:13px;top:437px;width:300px;height:111px"></div>
    <div class="gbl" style="left:19px;top:430px">Приоритеты&nbsp; (2)</div>
    <div class="lb" style="left:16px;top:448px;width:290px;height:81px">Type=0x108,SubType=0x00,1<br>Type=0x028,2</div>

    <div class="gb" style="left:13px;top:557px;width:300px;height:111px"></div>
    <div class="gbl" style="left:19px;top:550px">Список экстра POI</div>
    <div class="lb" style="left:16px;top:567px;width:290px;height:81px"></div>
  </div>
</div>
<!-- dialog: Редактирование POI (page coordinates) -->
<div class="a" id="dlg" style="left:346px;top:9px;width:959px;height:710px;border-radius:7px;background:#a9c7e5;box-shadow:0 0 8px 1px rgba(0,0,0,.5),0 1px 3px rgba(0,0,0,.4)"></div>
<div class="a" style="left:347px;top:10px;width:957px;height:196px;border-radius:6px 6px 0 0;background:linear-gradient(#d5e3f3,#e8eff8)"></div>
<div class="a" style="left:347px;top:10px;width:957px;height:28px;border-radius:6px 6px 0 0;background:linear-gradient(90deg,#e2ecf7 0,#cfe0f1 120px,#bbd3eb 260px,#b4cee9 45%,#b2cde8 78%,#c4d8ee 91%,#d3e2f2 100%)"></div>
<div class="a" style="left:347px;top:10px;width:957px;height:28px;border-radius:6px 6px 0 0;background:linear-gradient(115deg,rgba(255,255,255,0) 0,rgba(255,255,255,0) 35%,rgba(140,170,205,.22) 44%,rgba(255,255,255,0) 47%,rgba(255,255,255,0) 60%,rgba(140,170,205,.18) 70%,rgba(255,255,255,0) 73%,rgba(255,255,255,0) 100%)"></div>
<div class="a" style="left:346px;top:9px;width:959px;height:710px;border-radius:7px;box-shadow:inset 0 0 0 1px #27303c,inset 0 0 0 2px rgba(255,255,255,.78)"></div>
<svg class="a" style="left:353px;top:16px" width="16" height="16" viewBox="0 0 16 16"><rect width="16" height="16" fill="#081208"/><rect x="1.200" y="1.200" width="13.600" height="13.600" fill="#2a8a30"/><path d="M1.200 1.200 H7.500 L4.500 8.500 L1.200 10.500Z" fill="#62b8ec"/><path d="M2 3 h3 M2 5 h2" stroke="#143a5c" stroke-width=".9"/><path d="M5.500 6 C8 2.500 12 3 13 6 C10.500 9 7.500 9 5.500 6Z" fill="#86b4dc"/><path d="M7 5.500 C8.500 4 11 4.500 11.500 6" stroke="#e8f0f8" stroke-width="1" fill="none"/><path d="M1.200 13 L7.500 8 L9.500 10 L3.500 14.800 H1.200Z" fill="#8cc878"/><path d="M9 1.200 H14.800 V6 Z" fill="#1c6c24"/><path d="M12 11 L15 15" stroke="#e8862a" stroke-width="1.600"/></svg>
<div class="t" style="left:374px;top:16px;font-size:12px;line-height:16px;text-shadow:0 0 6px #fff,0 0 6px #fff,0 0 10px #fff">Редактирование POI</div>
<!-- close button -->
<div class="a" style="left:1252px;top:10px;width:47px;height:19px;border:1px solid #4a1a14;border-top:none;border-radius:0 0 5px 5px;background:linear-gradient(#e9a99b 0,#dc8a78 45%,#c8442c 50%,#cf5a3a 85%,#e08a60 100%);box-shadow:inset 0 0 0 1px rgba(255,255,255,.45)"></div>
<div class="t" style="left:1252px;top:7px;width:47px;text-align:center;font-size:18px;line-height:22px;transform:scaleX(1.18);font-weight:bold;color:#fff;text-shadow:0 0 2px #3a0a04,0 0 1px #3a0a04">x</div>
<!-- client -->
<div class="a" id="cl" style="left:351px;top:37px;width:949px;height:677px;box-shadow:inset 0 0 0 1px rgba(255,255,255,.6)"></div>
<div class="a" style="left:352px;top:38px;width:947px;height:675px;background:#f0f0f0;box-shadow:inset 0 0 0 1px #5f6f82"></div>

<!-- outer group "Рисунок" -->
<div class="gb" style="left:362px;top:46px;width:935px;height:567px;border-radius:0;border-color:#d9dfe4"></div>
<div class="chk" style="left:361px;top:41px;background:#f4f4f4"></div>
<svg class="a" style="left:363px;top:43px" width="9" height="9" viewBox="0 0 9 9"><path d="M1 4 L3.4 7.6 L8 .8" fill="none" stroke="#2a3f9a" stroke-width="1.8"/></svg>
<div class="gbl" style="left:374px;top:40px;padding:0 3px 0 9px">Рисунок</div>

<!-- POI #127 group -->
<div class="gb" style="left:370px;top:57px;width:134px;height:90px"></div>
<div class="gbl c" style="left:379px;top:50px;width:113px">POI #127</div>
<div class="t r" style="left:386px;top:75px;width:50px">Тип</div>
<div class="inp" style="left:438px;top:72px;width:57px;height:19px">110</div>
<div class="t r" style="left:386px;top:94px;width:50px">Подтип</div>
<div class="inp" style="left:438px;top:91px;width:57px;height:18px">04</div>
<div class="inp" style="left:373px;top:122px;width:126px;height:19px"></div>

<!-- Просмотр group -->
<div class="gb" style="left:370px;top:154px;width:134px;height:318px"></div>
<div class="gbl" style="left:376px;top:148px">Просмотр</div>
<div class="t c" style="left:405px;top:162px;width:60px">Есть</div>
<svg class="a" style="left:428px;top:236px" width="13" height="14" viewBox="0 0 13 14"><rect x=".5" y=".5" width="12" height="13" rx="2" fill="#fff"/><rect x="1.5" y="1.5" width="10" height="11" rx="1.2" fill="#eceeec" stroke="#0a0a0a"/><path d="M6 3 h1 v3 h1 v1 h1 v1 h1 v1 h-3 v1 h1 v1 h-3 v-1 h1 v-1 h-3 v-1 h1 v-1 h1 v-1 h1 Z" fill="#f03000"/></svg>
<div class="t c" style="left:405px;top:316px;width:60px">Будет</div>
<svg class="a" style="left:428px;top:391px" width="13" height="14" viewBox="0 0 13 14"><rect x=".5" y=".5" width="12" height="13" rx="2" fill="#fff"/><rect x="1.5" y="1.5" width="10" height="11" rx="1.2" fill="#eceeec" stroke="#0a0a0a"/><path d="M6 3 h1 v3 h1 v1 h1 v1 h1 v1 h-3 v1 h1 v1 h-3 v-1 h1 v-1 h-3 v-1 h1 v-1 h1 v-1 h1 Z" fill="#f03000"/></svg>

<div class="chk" style="left:377px;top:487px"></div>
<div class="t" style="left:394px;top:481px;line-height:13px;white-space:normal;width:100px">Другой рисунок ночью</div>

<div class="btn" style="left:370px;top:552px;width:66px;height:22px">Копировать</div>
<div class="btn" style="left:438px;top:552px;width:66px;height:22px">Импорт</div>
<div class="btn dis" style="left:370px;top:577px;width:66px;height:22px">Вставить</div>
<div class="btn" style="left:438px;top:577px;width:66px;height:22px">Экспорт</div>
<!-- cyan panel -->
<div class="a" style="left:513px;top:59px;width:200px;height:537px;background:#c0ffff;border:1px solid #6d7b80;border-right-color:#8a9aa0;border-bottom-color:#8a9aa0"></div>
<div class="t r" style="left:560px;top:67px;width:81px">#&nbsp;цветов</div>
<div class="cmb" style="left:644px;top:62px;width:49px;height:21px">16</div>
<div class="t r" style="left:560px;top:90px;width:81px">Цветокод</div>
<div class="cmb" style="left:644px;top:86px;width:49px;height:21px">10</div>
<div class="gb" style="left:516px;top:111px;width:194px;height:290px;border-color:#d0f4f6;box-shadow:inset 1px 1px 0 #eaffff,1px 1px 0 #eaffff"></div>
<div class="gbl" style="left:521px;top:105px;background:#c0ffff">Палитра рисунка</div>
<div class="t" style="left:522px;top:125px;white-space:normal;width:186px">Клик левой кн. - выбор цвета<br>Клик правой - изменение цвета<br>Клик на "Прозрачность" - выбор<br>прозрачности цвета</div>
<!-- palette swatches -->
<div class="a sw" style="left:522px;top:200px;width:176px;height:10px;display:flex">
<i style="flex:1;background:#c0c0c0"></i><i style="flex:1;background:#f4f8f4"></i><i style="flex:1;background:#000"></i><i style="flex:1;background:#eef0ee"></i><i style="flex:1;background:#ececec"></i><i style="flex:1;background:#e4e6e4"></i><i style="flex:1;background:#dcdcdc"></i><i style="flex:1;background:#d8d8d8"></i><i style="flex:1;background:#d4d4d4"></i><i style="flex:1;background:#d0d0d0"></i><i style="flex:1;background:#f8f8f8"></i><i style="flex:1;background:#e4e8e4"></i><i style="flex:1;background:#f03000"></i><i style="flex:1;background:#d8dcd8"></i><i style="flex:1;background:#ccd0cc"></i><i style="flex:1;background:#c8c8c8"></i>
</div>
<div class="btn" style="left:531px;top:374px;width:69px;height:19px;line-height:16px">Добавить</div>
<div class="btn" style="left:619px;top:374px;width:69px;height:19px;line-height:16px">Удалить</div>
<!-- Прозрачность -->
<div class="a c" style="left:522px;top:404px;width:175px;height:19px;background:#f0f0f0;border:1px solid;border-color:#7a7a7a #fff #fff #7a7a7a;line-height:16px">Прозрачность</div>
<!-- Режим рисования -->
<div class="gb" style="left:562px;top:475px;width:102px;height:112px;border-color:#d0f4f6;box-shadow:inset 1px 1px 0 #eaffff,1px 1px 0 #eaffff"></div>
<div class="gbl" style="left:569px;top:469px;background:#c0ffff">Режим рисования</div>
<div class="a" style="left:578px;top:484px;width:32px;height:95px;background:#c0c4c0;border:1px solid;border-color:#808080 #fff #fff #808080"></div>
<div class="a" style="left:618px;top:484px;width:32px;height:32px;background:#fafafa;border:1px solid;border-color:#606060 #fff #fff #606060"></div>
<div class="a" style="left:618px;top:516px;width:32px;height:32px;background:#f0f0f0;border:1px solid;border-color:#fff #707070 #707070 #fff"></div>
<div class="a" style="left:618px;top:548px;width:32px;height:32px;background:#f0f0f0;border:1px solid;border-color:#fff #707070 #707070 #fff"></div>
<svg class="a" style="left:618px;top:484px" width="32" height="96" viewBox="0 0 32 96">
 <!-- pencil -->
 <path d="M10 21 L12 16 L22 8 L25 11 L15 20 Z" fill="#f4f4f4" stroke="#111" stroke-width="1"/><path d="M20 9.5 L22 8 L25 11 L23 12.6Z" fill="#e8e040" stroke="#111" stroke-width=".8"/>
 <!-- bucket -->
 <path d="M13 42 L21 36 L29 48 L21 54 Z" fill="#dcdcdc" stroke="#222" stroke-width="1"/><path d="M17 39 L25 51" stroke="#fff" stroke-width="2" opacity=".7"/><path d="M13 42 L21 36 L17 34.500 C11 35 7 40 7 52 L11 52 C11 47 11.500 44 13 42Z" fill="#c01028" stroke="#400" stroke-width=".6"/>
 <!-- picker -->
 <circle cx="22" cy="75" r="3.6" fill="#d8d8d8" stroke="#111" stroke-width="1"/><path d="M19.5 77.5 L11 86" stroke="#111" stroke-width="3.4"/><path d="M19.5 77.5 L11 86" stroke="#c01838" stroke-width="1.8"/><path d="M19.5 77.5 L16 81" stroke="#e8e8e8" stroke-width="1.6"/>
</svg>
<!-- toolbar -->
<div class="a" style="left:721px;top:47px;width:32px;height:31px;background:#fafafa;border:1px solid;border-color:#606060 #fff #fff #606060;border-width:2px 1px 1px 2px"></div>
<svg class="a" style="left:721px;top:47px" width="32" height="31" viewBox="0 0 32 31" shape-rendering="crispEdges"><path d="M6 8h24M6 14h24M6 20h24M6 26h24M9 5v24M15 5v24M21 5v24M27 5v24" stroke="#000" stroke-width="2" fill="none"/></svg>
<div class="tb" style="top:79px"><svg viewBox="0 0 29 29"><rect x="10.5" y="11.500" width="15" height="14.500" fill="#fff" stroke="#000"/><rect x="1.500" y="2.500" width="16.500" height="15.500" fill="#000"/><rect x="2.500" y="3.500" width="14.500" height="13.500" fill="none" stroke="#fff" stroke-width="1"/><path d="M19.500 3.500 C22.500 4 24 6 24.500 8.500" fill="none" stroke="#222" stroke-width="1.400"/><path d="M22.300 7.500 L26.800 7.500 L24.800 11Z" fill="#222"/><path d="M8.500 25.500 C5.500 25.500 3.500 24 3 21.500" fill="none" stroke="#222" stroke-width="1.400"/><path d="M.8 22.500 L5.300 22.500 L2.800 19Z" fill="#222"/></svg></div>
<div class="tb" style="top:111px"><svg viewBox="0 0 29 29"><path d="M4 7 C6 4 9 4.500 11 7.500 L15 12.500 C18 8.500 22 5 26 4 C23 8.500 19.500 13 18.500 16 L24 22 C25 24.500 22.500 26.500 20 25 L14.500 19.500 C12 22.500 9 25.500 5.500 26.500 C3.500 25.500 3.500 23 5.500 21 L11 15 L4.500 9.500 C4 8.500 3.800 7.800 4 7Z" fill="#c80c10"/><path d="M4 7 C6 4 9 4.500 11 7.500 L15 12.500 L13.300 14.500 L5 8.500Z M26 4 C23 8.500 19.500 13 18.500 16 L16.800 14.300 C19.500 9.500 22.500 6.500 26 4Z" fill="#ee7c7c"/><path d="M14.500 19.500 L20 25 C22.500 26.500 25 24.500 24 22 L22 20 C22 22 20 23.500 18 22Z" fill="#8a0408"/></svg></div>
<div class="tb" style="top:143px"><svg viewBox="0 0 29 29"><path d="M5 24 C5.500 14 10.500 8.500 17.500 8.500 L16.500 4.500 L25.500 10.500 L19.500 17.500 L18.500 13.500 C13 13.500 8.500 17 5 24Z" fill="#161616"/><path d="M17.800 6.800 L23.500 10.600 L20 14.800 L19.300 11.800 C18 11.500 16.800 11.600 15.800 11.900 C16.800 10.600 17.600 10.200 18.500 10Z" fill="#f2f2f2" stroke="#444" stroke-width=".6"/></svg></div>
<div class="tb" style="top:175px"><svg viewBox="0 0 29 29"><path d="M24 26 C23.500 16 18.500 10.500 11.500 10.500 L12.500 6.500 L3.500 12.500 L9.500 19.500 L10.500 15.500 C16 15.500 20.500 19 24 26Z" fill="#161616"/><path d="M11.200 8.800 L5.500 12.600 L9 16.800 L9.700 13.800 C11 13.500 12.200 13.600 13.200 13.900 C12.200 12.600 11.400 12.200 10.500 12Z" fill="#f2f2f2" stroke="#444" stroke-width=".6"/></svg></div>
<div class="tb" style="top:207px"><svg viewBox="0 0 29 29"><path d="M5.500 9.500 L12 5.500 L12 8 L23 10.500 L12 12 L12 14Z" fill="#2c2c28" stroke="#6c6c64" stroke-width="1.200"/><path d="M24 18.500 L17.500 14.500 L17.500 17 L6.500 19.500 L17.500 21 L17.500 23Z" fill="#2c2c28" stroke="#6c6c64" stroke-width="1.200"/><path d="M7.500 9.700 L11 7.500 L11 12Z M22 18.700 L18.500 16.500 L18.500 21Z" fill="#d0d0c8"/></svg></div>
<div class="tb" style="top:239px"><svg viewBox="0 0 29 29"><path d="M10.500 4.500 L14.500 11 L12.300 11 L11 22 L9.500 11 L6.500 11Z" fill="#e4e4dc" stroke="#24241e" stroke-width="1.300"/><path d="M11 12 L11 22 L12.300 11Z" fill="#24241e"/><path d="M19 23.500 L14.500 17 L17.200 17 L18.500 5 L20.200 17 L23.500 17Z" fill="#161614" stroke="#55554c" stroke-width=".8"/></svg></div>
<div class="tb" style="top:271px"><svg viewBox="0 0 29 29"><path d="M5.500 12.800 L12.500 11.800 L15.500 8.500 L18.500 11.800 L22 13.800 L18.500 15.500 L15.500 19 L12.500 15.500Z" fill="#26261f" stroke="#77776c" stroke-width="1"/><path d="M13.300 12.300 L15.500 10.300 L17.700 12.300 L15.500 14.500Z" fill="#f2f2ec"/></svg></div>
<div class="tb" style="top:303px"><svg viewBox="0 0 29 29"><path d="M24 13.800 L17 12.800 L14 9.500 L11 12.800 L7.500 14.800 L11 16.500 L14 20 L17 16.500Z" fill="#26261f" stroke="#77776c" stroke-width="1"/><path d="M16.200 13.300 L14 11.300 L11.800 13.300 L14 15.500Z" fill="#f2f2ec"/></svg></div>
<div class="tb" style="top:335px"><svg viewBox="0 0 29 29"><path d="M14 3.500 L16 14.500 L12 14.500Z" fill="#e8e8e8" stroke="#222" stroke-width="1"/><path d="M7 14.500 L21 14.500 L14 22.500Z" fill="#000"/><path d="M12.500 15.500 L15.500 15.500 L14 13Z" fill="#bbb"/></svg></div>
<div class="tb" style="top:367px"><svg viewBox="0 0 29 29"><path d="M14 5.500 L19.500 12.500 L16.300 12.800 L14.600 22.500 L12.800 12.800 L8.500 12.500Z" fill="#f4f4f0" stroke="#33332e" stroke-width="1.200"/><path d="M14 14 L14.600 22.500 L16 14Z" fill="#33332e"/></svg></div>
<!-- G button -->
<div class="a c" style="left:722px;top:431px;width:30px;height:30px;background:#ff0000;border:1px solid #a0a0a0;font-weight:bold;font-size:19px;line-height:27px">G</div>
<!-- slider -->
<div class="a" style="left:732px;top:487px;width:3px;height:104px;background:#8a8a8a;border-right:1px solid #fdfdfd;border-left:1px solid #7a7a7a"></div>
<svg class="a" style="left:718px;top:488px" width="32" height="102" viewBox="0 0 32 102" shape-rendering="crispEdges"><path d="M0 4.5h4M28 4.5h4M0 14.5h4M28 14.5h4M0 24.5h4M28 24.5h4M0 34.5h4M28 34.5h4M0 44.5h4M28 44.5h4M0 53.5h4M28 53.5h4M0 63.5h4M28 63.5h4M0 73.5h4M28 73.5h4M0 83.5h4M28 83.5h4M0 93.5h4M28 93.5h4M0 98.5h4M28 98.5h4" stroke="#000" stroke-width="1" fill="none"/></svg>
<div class="a" style="left:723px;top:532px;width:22px;height:11px;background:#f0f0f0;border:1px solid;border-color:#fff #696969 #696969 #fff;box-shadow:inset -1px -1px 0 #a0a0a0"></div>
<!-- canvas -->
<div class="a" style="left:753px;top:46px;width:543px;height:544px;background:#ffffc0"></div>
<!-- pixel grid -->
<div class="a" style="left:879px;top:164px;width:286px;height:306px;background:#f4f6fc;border:1px solid;border-color:#a8a89a #fff #fff #a8a89a;box-shadow:inset 1px 1px 0 #e6e8ee"></div>
<svg class="a" style="left:885px;top:170px" width="276" height="297" viewBox="0 0 276 297" shape-rendering="crispEdges">
<rect x="0" y="0" width="276" height="297" fill="#33330c"/>
<rect x="2" y="2" width="20" height="20" fill="#eeeeee"/>
<rect x="23" y="2" width="20" height="20" fill="#eeeeee"/>
<rect x="44" y="2" width="20" height="20" fill="#f8fcf8"/>
<rect x="65" y="2" width="20" height="20" fill="#f8fcf8"/>
<rect x="86" y="2" width="20" height="20" fill="#f8fcf8"/>
<rect x="107" y="2" width="20" height="20" fill="#f8fcf8"/>
<rect x="128" y="2" width="20" height="20" fill="#f8fcf8"/>
<rect x="149" y="2" width="20" height="20" fill="#f8fcf8"/>
<rect x="170" y="2" width="20" height="20" fill="#f8fcf8"/>
<rect x="191" y="2" width="20" height="20" fill="#f8fcf8"/>
<rect x="212" y="2" width="20" height="20" fill="#f8fcf8"/>
<rect x="233" y="2" width="20" height="20" fill="#eeeeee"/>
<rect x="254" y="2" width="20" height="20" fill="#eeeeee"/>
<rect x="2" y="23" width="20" height="20" fill="#eeeeee"/>
<rect x="23" y="23" width="20" height="20" fill="#f8fcf8"/>
<rect x="44" y="23" width="20" height="20" fill="#000000"/>
<rect x="65" y="23" width="20" height="20" fill="#000000"/>
<rect x="86" y="23" width="20" height="20" fill="#000000"/>
<rect x="107" y="23" width="20" height="20" fill="#000000"/>
<rect x="128" y="23" width="20" height="20" fill="#000000"/>
<rect x="149" y="23" width="20" height="20" fill="#000000"/>
<rect x="170" y="23" width="20" height="20" fill="#000000"/>
<rect x="191" y="23" width="20" height="20" fill="#000000"/>
<rect x="212" y="23" width="20" height="20" fill="#000000"/>
<rect x="233" y="23" width="20" height="20" fill="#f8fcf8"/>
<rect x="254" y="23" width="20" height="20" fill="#eeeeee"/>
<rect x="2" y="44" width="20" height="20" fill="#f8fcf8"/>
<rect x="23" y="44" width="20" height="20" fill="#000000"/>
<rect x="44" y="44" width="20" height="20" fill="#ecf0ec"/>
<rect x="65" y="44" width="20" height="20" fill="#ecf0ec"/>
<rect x="86" y="44" width="20" height="20" fill="#eeeeee"/>
<rect x="107" y="44" width="20" height="20" fill="#e6e8e6"/>
<rect x="128" y="44" width="20" height="20" fill="#d8dcd8"/>
<rect x="149" y="44" width="20" height="20" fill="#d8dcd8"/>
<rect x="170" y="44" width="20" height="20" fill="#d8d8d8"/>
<rect x="191" y="44" width="20" height="20" fill="#d4d8d4"/>
<rect x="212" y="44" width="20" height="20" fill="#d0d0d0"/>
<rect x="233" y="44" width="20" height="20" fill="#000000"/>
<rect x="254" y="44" width="20" height="20" fill="#f8fcf8"/>
<rect x="2" y="65" width="20" height="20" fill="#f8fcf8"/>
<rect x="23" y="65" width="20" height="20" fill="#000000"/>
<rect x="44" y="65" width="20" height="20" fill="#f6f8f6"/>
<rect x="65" y="65" width="20" height="20" fill="#f8faf8"/>
<rect x="86" y="65" width="20" height="20" fill="#f2f4f2"/>
<rect x="107" y="65" width="20" height="20" fill="#eaecea"/>
<rect x="128" y="65" width="20" height="20" fill="#f63000"/>
<rect x="149" y="65" width="20" height="20" fill="#dcdcdc"/>
<rect x="170" y="65" width="20" height="20" fill="#d8d8d8"/>
<rect x="191" y="65" width="20" height="20" fill="#d4d8d4"/>
<rect x="212" y="65" width="20" height="20" fill="#d0d0d0"/>
<rect x="233" y="65" width="20" height="20" fill="#000000"/>
<rect x="254" y="65" width="20" height="20" fill="#f8fcf8"/>
<rect x="2" y="86" width="20" height="20" fill="#f8fcf8"/>
<rect x="23" y="86" width="20" height="20" fill="#000000"/>
<rect x="44" y="86" width="20" height="20" fill="#f2f6f2"/>
<rect x="65" y="86" width="20" height="20" fill="#f2f6f2"/>
<rect x="86" y="86" width="20" height="20" fill="#f0f2f0"/>
<rect x="107" y="86" width="20" height="20" fill="#e8eae8"/>
<rect x="128" y="86" width="20" height="20" fill="#f63000"/>
<rect x="149" y="86" width="20" height="20" fill="#d8dcd8"/>
<rect x="170" y="86" width="20" height="20" fill="#d8d8d8"/>
<rect x="191" y="86" width="20" height="20" fill="#d4d8d4"/>
<rect x="212" y="86" width="20" height="20" fill="#d0d4d0"/>
<rect x="233" y="86" width="20" height="20" fill="#000000"/>
<rect x="254" y="86" width="20" height="20" fill="#f8fcf8"/>
<rect x="2" y="107" width="20" height="20" fill="#f8fcf8"/>
<rect x="23" y="107" width="20" height="20" fill="#000000"/>
<rect x="44" y="107" width="20" height="20" fill="#f0f4f0"/>
<rect x="65" y="107" width="20" height="20" fill="#f0f4f0"/>
<rect x="86" y="107" width="20" height="20" fill="#eef0ee"/>
<rect x="107" y="107" width="20" height="20" fill="#e8ece8"/>
<rect x="128" y="107" width="20" height="20" fill="#f63000"/>
<rect x="149" y="107" width="20" height="20" fill="#d8dcd8"/>
<rect x="170" y="107" width="20" height="20" fill="#d8d8d8"/>
<rect x="191" y="107" width="20" height="20" fill="#d4d8d4"/>
<rect x="212" y="107" width="20" height="20" fill="#d0d0d0"/>
<rect x="233" y="107" width="20" height="20" fill="#000000"/>
<rect x="254" y="107" width="20" height="20" fill="#f8fcf8"/>
<rect x="2" y="128" width="20" height="20" fill="#f8fcf8"/>
<rect x="23" y="128" width="20" height="20" fill="#000000"/>
<rect x="44" y="128" width="20" height="20" fill="#eaeeea"/>
<rect x="65" y="128" width="20" height="20" fill="#eaeeea"/>
<rect x="86" y="128" width="20" height="20" fill="#e6e8e6"/>
<rect x="107" y="128" width="20" height="20" fill="#f63000"/>
<rect x="128" y="128" width="20" height="20" fill="#f63000"/>
<rect x="149" y="128" width="20" height="20" fill="#f63000"/>
<rect x="170" y="128" width="20" height="20" fill="#d8d8d8"/>
<rect x="191" y="128" width="20" height="20" fill="#d4d4d4"/>
<rect x="212" y="128" width="20" height="20" fill="#cecece"/>
<rect x="233" y="128" width="20" height="20" fill="#000000"/>
<rect x="254" y="128" width="20" height="20" fill="#f8fcf8"/>
<rect x="2" y="149" width="20" height="20" fill="#f8fcf8"/>
<rect x="23" y="149" width="20" height="20" fill="#000000"/>
<rect x="44" y="149" width="20" height="20" fill="#e2e6e2"/>
<rect x="65" y="149" width="20" height="20" fill="#e0e4e0"/>
<rect x="86" y="149" width="20" height="20" fill="#f63000"/>
<rect x="107" y="149" width="20" height="20" fill="#f63000"/>
<rect x="128" y="149" width="20" height="20" fill="#f63000"/>
<rect x="149" y="149" width="20" height="20" fill="#f63000"/>
<rect x="170" y="149" width="20" height="20" fill="#f63000"/>
<rect x="191" y="149" width="20" height="20" fill="#d2d4d2"/>
<rect x="212" y="149" width="20" height="20" fill="#cccccc"/>
<rect x="233" y="149" width="20" height="20" fill="#000000"/>
<rect x="254" y="149" width="20" height="20" fill="#f8fcf8"/>
<rect x="2" y="170" width="20" height="20" fill="#f8fcf8"/>
<rect x="23" y="170" width="20" height="20" fill="#000000"/>
<rect x="44" y="170" width="20" height="20" fill="#d6dad6"/>
<rect x="65" y="170" width="20" height="20" fill="#f63000"/>
<rect x="86" y="170" width="20" height="20" fill="#f63000"/>
<rect x="107" y="170" width="20" height="20" fill="#f63000"/>
<rect x="128" y="170" width="20" height="20" fill="#f63000"/>
<rect x="149" y="170" width="20" height="20" fill="#f63000"/>
<rect x="170" y="170" width="20" height="20" fill="#f63000"/>
<rect x="191" y="170" width="20" height="20" fill="#f63000"/>
<rect x="212" y="170" width="20" height="20" fill="#c8ccc8"/>
<rect x="233" y="170" width="20" height="20" fill="#000000"/>
<rect x="254" y="170" width="20" height="20" fill="#f8fcf8"/>
<rect x="2" y="191" width="20" height="20" fill="#f8fcf8"/>
<rect x="23" y="191" width="20" height="20" fill="#000000"/>
<rect x="44" y="191" width="20" height="20" fill="#d0d4d0"/>
<rect x="65" y="191" width="20" height="20" fill="#d0d4d0"/>
<rect x="86" y="191" width="20" height="20" fill="#d0d4d0"/>
<rect x="107" y="191" width="20" height="20" fill="#d4d8d4"/>
<rect x="128" y="191" width="20" height="20" fill="#f63000"/>
<rect x="149" y="191" width="20" height="20" fill="#d4d8d4"/>
<rect x="170" y="191" width="20" height="20" fill="#d4d4d4"/>
<rect x="191" y="191" width="20" height="20" fill="#d0d0d0"/>
<rect x="212" y="191" width="20" height="20" fill="#c8c8c8"/>
<rect x="233" y="191" width="20" height="20" fill="#000000"/>
<rect x="254" y="191" width="20" height="20" fill="#f8fcf8"/>
<rect x="2" y="212" width="20" height="20" fill="#f8fcf8"/>
<rect x="23" y="212" width="20" height="20" fill="#000000"/>
<rect x="44" y="212" width="20" height="20" fill="#d0d4d0"/>
<rect x="65" y="212" width="20" height="20" fill="#d0d4d0"/>
<rect x="86" y="212" width="20" height="20" fill="#d0d4d0"/>
<rect x="107" y="212" width="20" height="20" fill="#f63000"/>
<rect x="128" y="212" width="20" height="20" fill="#f63000"/>
<rect x="149" y="212" width="20" height="20" fill="#f63000"/>
<rect x="170" y="212" width="20" height="20" fill="#d0d4d0"/>
<rect x="191" y="212" width="20" height="20" fill="#cccccc"/>
<rect x="212" y="212" width="20" height="20" fill="#c8c8c8"/>
<rect x="233" y="212" width="20" height="20" fill="#000000"/>
<rect x="254" y="212" width="20" height="20" fill="#f8fcf8"/>
<rect x="2" y="233" width="20" height="20" fill="#f8fcf8"/>
<rect x="23" y="233" width="20" height="20" fill="#000000"/>
<rect x="44" y="233" width="20" height="20" fill="#d0d0d0"/>
<rect x="65" y="233" width="20" height="20" fill="#d0d0d0"/>
<rect x="86" y="233" width="20" height="20" fill="#d0d4d0"/>
<rect x="107" y="233" width="20" height="20" fill="#d0d4d0"/>
<rect x="128" y="233" width="20" height="20" fill="#d0d4d0"/>
<rect x="149" y="233" width="20" height="20" fill="#cccccc"/>
<rect x="170" y="233" width="20" height="20" fill="#cccccc"/>
<rect x="191" y="233" width="20" height="20" fill="#c8c8c8"/>
<rect x="212" y="233" width="20" height="20" fill="#c4c4c4"/>
<rect x="233" y="233" width="20" height="20" fill="#000000"/>
<rect x="254" y="233" width="20" height="20" fill="#f8fcf8"/>
<rect x="2" y="254" width="20" height="20" fill="#eeeeee"/>
<rect x="23" y="254" width="20" height="20" fill="#f8fcf8"/>
<rect x="44" y="254" width="20" height="20" fill="#000000"/>
<rect x="65" y="254" width="20" height="20" fill="#000000"/>
<rect x="86" y="254" width="20" height="20" fill="#000000"/>
<rect x="107" y="254" width="20" height="20" fill="#000000"/>
<rect x="128" y="254" width="20" height="20" fill="#000000"/>
<rect x="149" y="254" width="20" height="20" fill="#000000"/>
<rect x="170" y="254" width="20" height="20" fill="#000000"/>
<rect x="191" y="254" width="20" height="20" fill="#000000"/>
<rect x="212" y="254" width="20" height="20" fill="#000000"/>
<rect x="233" y="254" width="20" height="20" fill="#f8fcf8"/>
<rect x="254" y="254" width="20" height="20" fill="#eeeeee"/>
<rect x="2" y="275" width="20" height="20" fill="#eeeeee"/>
<rect x="23" y="275" width="20" height="20" fill="#eeeeee"/>
<rect x="44" y="275" width="20" height="20" fill="#f8fcf8"/>
<rect x="65" y="275" width="20" height="20" fill="#f8fcf8"/>
<rect x="86" y="275" width="20" height="20" fill="#f8fcf8"/>
<rect x="107" y="275" width="20" height="20" fill="#f8fcf8"/>
<rect x="128" y="275" width="20" height="20" fill="#f8fcf8"/>
<rect x="149" y="275" width="20" height="20" fill="#f8fcf8"/>
<rect x="170" y="275" width="20" height="20" fill="#f8fcf8"/>
<rect x="191" y="275" width="20" height="20" fill="#f8fcf8"/>
<rect x="212" y="275" width="20" height="20" fill="#f8fcf8"/>
<rect x="233" y="275" width="20" height="20" fill="#eeeeee"/>
<rect x="254" y="275" width="20" height="20" fill="#eeeeee"/>
</svg>
<!-- below canvas -->
<div class="t r" style="left:1000px;top:594px;width:89px">#&nbsp;столбцов</div>
<div class="cmb" style="left:1091px;top:590px;width:42px;height:21px">13</div>
<div class="t r" style="left:1130px;top:594px;width:58px">#&nbsp;строк</div>
<div class="cmb" style="left:1191px;top:590px;width:42px;height:21px">14</div>
<!-- Надпись group -->
<div class="gb" style="left:362px;top:620px;width:586px;height:91px"></div>
<div class="chk" style="left:361px;top:615px"></div>
<div class="gbl" style="left:374px;top:614px;padding:0 3px 0 8px">Надпись</div>
<!-- Настраиваемые надписи -->
<div class="gb" style="left:987px;top:620px;width:286px;height:70px"></div>
<div class="chk" style="left:986px;top:615px"></div>
<div class="gbl" style="left:999px;top:614px;padding:0 3px 0 8px">Настраиваемые надписи</div>
<div class="btn def" style="left:1174px;top:692px;width:55px;height:19px;line-height:16px">OK</div>
<div class="btn" style="left:1234px;top:692px;width:55px;height:19px;line-height:16px">Отмена</div>
<!-- taskbar -->
<div class="a" style="left:0;top:728px;width:1366px;height:40px;background:linear-gradient(90deg,#8a9fb8 0,#8ea4be 50px,#a6c2de 100px,#a9c6e4 200px,#aac8e6 1105px,#8ea4bd 1150px,#8a9fb8 1300px,#7f94ad 1366px);box-shadow:inset 0 1px 0 #5a6a7c,inset 0 2px 0 rgba(255,255,255,.45)"></div>
<svg class="a" style="left:6px;top:728px" width="42" height="40" viewBox="0 0 42 40"><defs><linearGradient id="orbA" x1="0" y1="0" x2="0" y2="1"><stop offset="0" stop-color="#9ab4cc"/><stop offset=".42" stop-color="#5a86b0"/><stop offset=".5" stop-color="#0c4c98"/><stop offset=".8" stop-color="#1470c0"/><stop offset="1" stop-color="#28c8f0"/></linearGradient></defs><circle cx="21" cy="20" r="18.500" fill="url(#orbA)" stroke="#1c3858" stroke-width="1"/><circle cx="21" cy="20" r="17.500" fill="none" stroke="#cfe4f6" stroke-width=".7" opacity=".6"/><path d="M12.500 12.500 C15.500 10.500 18 11 20.500 12.500 L19.200 19.500 C16.500 18.200 14 18.300 11 19.800Z" fill="#ea5a22"/><path d="M22.300 13 C25 14.500 28 14 31 11.800 L29.500 19 C27 21 24 21 21 19.800Z" fill="#80b838"/><path d="M10.500 21.500 C13.500 20 16 20 18.800 21.300 L17.500 28.500 C15 27 12.500 27 9.300 28.800Z" fill="#3a98e8"/><path d="M20.600 21.800 C23.500 23 26.500 22.800 29.200 20.800 L27.800 28 C25 30 22 30 19.200 28.800Z" fill="#f8c424"/></svg>
<svg class="a" style="left:74px;top:731px" width="32" height="32" viewBox="0 0 32 32"><defs><linearGradient id="ieA" x1="0" y1="0" x2="0" y2="1"><stop offset="0" stop-color="#8fd4f8"/><stop offset="1" stop-color="#1e8ad8"/></linearGradient></defs><path d="M17 5 C25 5 30 11 30 18 V20 H11 C11.500 24 14 26 18 26 C21 26 23 24.500 24 23 H29.500 C28 28 23.500 31 17.500 31 C10 31 4.500 26 4.500 18 C4.500 10 10 5 17 5Z M11 15.500 H23.500 C23 12 21 10 17.500 10 C14 10 11.500 12 11 15.500Z" fill="url(#ieA)"/><path d="M2 27 C-2 20 10 6 24 2 C30 0 33 2 31 7 C30 4 26 4 22 6 C12 10 3 21 5 27 C5.500 29 8 29 10 28 C6 31 3 30 2 27Z" fill="#f4c21c"/></svg>
<svg class="a" style="left:135px;top:731px" width="32" height="32" viewBox="0 0 32 32"><path d="M10 2 L30 1 L31 29 L11 30Z" fill="#f4f6fa" stroke="#9aa8c0" stroke-width=".8"/><path d="M2 5 L25 2.500 L26 28.500 L3 31Z" fill="#fff" stroke="#8a98b4" stroke-width=".8"/><path d="M2 5 L11 4 L12 30 L3 31Z" fill="#2a56b0"/><path d="M11 4 L14 3.700 L15 29.700 L12 30Z" fill="#7f9ad4"/><text x="19" y="14" font-family="Liberation Sans,sans-serif" font-weight="bold" font-style="italic" font-size="12" text-anchor="middle" fill="#1c3f94">W</text><path d="M14 17.500 H24 M14 20.500 H24 M14 23.500 H24 M14 26.500 H24" stroke="#2a56b0" stroke-width="1.800"/></svg>
<svg class="a" style="left:196px;top:731px" width="32" height="32" viewBox="0 0 32 32"><path d="M8 8 L16 2 L24 6 L22 22 L14 30 L6 26Z" fill="#2a7ad4"/><path d="M8 8 L16 2 L24 6 L15 12Z" fill="#7cc0f4"/><path d="M15 12 L24 6 L22 22 L14 30Z" fill="#1450a4"/><circle cx="13" cy="19" r="3.600" fill="#d8ecfc" stroke="#1a3a7a" stroke-width="1.200"/><circle cx="22" cy="19" r="3.600" fill="#d8ecfc" stroke="#1a3a7a" stroke-width="1.200"/><path d="M4 14 L10 17" stroke="#1a3a7a" stroke-width="1.400"/><text x="26.500" y="31.500" font-family="Liberation Sans,sans-serif" font-weight="bold" font-size="16" text-anchor="middle" fill="#28c048" stroke="#e8ffe8" stroke-width=".5">2</text></svg>
<svg class="a" style="left:257px;top:731px" width="32" height="32" viewBox="0 0 32 32"><rect x="10" y="4" width="19" height="23" fill="#dceaf6" stroke="#8fb0d0" stroke-width=".8"/><rect x="7" y="5" width="19" height="23" fill="#eaf2fa" stroke="#8fb0d0" stroke-width=".8"/><rect x="3" y="6" width="20" height="23" fill="#cfe2f4" stroke="#7fa4cc" stroke-width=".8"/><circle cx="13" cy="17.500" r="9" fill="#f47a1a" stroke="#fbd0a0" stroke-width="1"/><path d="M10 12.500 L18.500 17.500 L10 22.500Z" fill="#fff"/></svg>
<svg class="a" style="left:319px;top:731px" width="32" height="32" viewBox="0 0 32 32"><path d="M3 9 L27 3 L28 8 L4 14Z" fill="#222"/><path d="M6 8.500 l3 3.800 M11 7.200 l3 3.800 M16 6 l3 3.800 M21 4.800 l3 3.800" stroke="#fff" stroke-width="2"/><rect x="4" y="13" width="25" height="17" fill="#fbfbfb" stroke="#222" stroke-width="1.600"/><text x="5" y="27.500" font-family="Liberation Sans,sans-serif" font-weight="bold" font-size="13.500" fill="#e0662a">3</text><text x="12.500" y="27.500" font-family="Liberation Sans,sans-serif" font-weight="bold" font-size="13.500" fill="#3a8a3a">2</text><text x="20" y="27.500" font-family="Liberation Sans,sans-serif" font-weight="bold" font-size="13.500" fill="#3a5ac0">1</text></svg>
<svg class="a" style="left:381px;top:731px" width="32" height="32" viewBox="0 0 32 32"><path d="M12 5 L30 2 L28 20 L12 22Z" fill="#2a5ac8"/><path d="M12 5 L30 2 L22 20 L12 22Z" fill="#3f7ae8"/><path d="M18 22 L24 21 L25 26 L17 27Z" fill="#b8bcc4"/><circle cx="11" cy="12" r="5" fill="#f0c8a0"/><path d="M6 11 C6 6 16 6 16 11 C14 9 9 9 6 11Z" fill="#3a2a1a"/><path d="M3 28 C3 20 7 17 11 17 C15 17 19 20 19 28Z" fill="#3a8ad8"/><path d="M2 24 C8 30 18 26 24 12" fill="none" stroke="#f4c21c" stroke-width="2"/></svg>
<div class="a" style="left:432px;top:729px;width:59px;height:40px;border:1px solid #5f7690;border-bottom:none;border-radius:3px 3px 0 0;background:linear-gradient(rgba(255,255,255,.42),rgba(255,255,255,.12) 50%,rgba(255,255,255,.2));box-shadow:inset 0 0 0 1px rgba(255,255,255,.55)"></div>
<div class="a" style="left:488px;top:729px;width:4px;height:40px;border:1px solid #5f7690;border-left:none;border-bottom:none;border-radius:0 3px 0 0;background:rgba(255,255,255,.3)"></div>
<svg class="a" style="left:445px;top:731px" width="32" height="32" viewBox="0 0 32 32"><path d="M2 7 H12 L14 10 H29 V26 H2Z" fill="#e8c45a" stroke="#b8922a" stroke-width=".8"/><rect x="4" y="5" width="3" height="2" fill="#3ab04a"/><rect x="9" y="5" width="3" height="2" fill="#d84a3a"/><path d="M5 11 H31 V27 H5Z" fill="#f8e29a" stroke="#c8a23a" stroke-width=".8"/><rect x="18" y="8" width="5" height="2" fill="#3a7ad8"/><path d="M7 22 C7 19 9 18 11 18 H22 C24 18 26 19 26 22 V31 H22 V26 H11 V31 H7Z" fill="#7fc4f0" stroke="#3a8ac8" stroke-width=".8"/></svg>
<div class="a" style="left:494px;top:729px;width:59px;height:40px;border:1px solid #5f7690;border-bottom:none;border-radius:3px 3px 0 0;background:linear-gradient(rgba(255,255,255,.42),rgba(255,255,255,.12) 50%,rgba(255,255,255,.2));box-shadow:inset 0 0 0 1px rgba(255,255,255,.55)"></div>
<svg class="a" style="left:507px;top:731px" width="32" height="32" viewBox="0 0 32 32"><path d="M7 3 C11 0 15 2 17 2 C25 2 30 8 29.500 16 C31 20 30 25 26 28 C22 31 19 29 16 30 C8 30 2 24 3 16 C1 12 2 6 7 3Z" fill="#12a5e0"/><text x="16" y="25" font-family="Liberation Sans,sans-serif" font-weight="bold" font-size="25" text-anchor="middle" fill="#fff">S</text><path d="M22 20 L29 20 L31 23 L31 29 L28 32 L22 32 L19 28 L19 23Z" fill="#fff" stroke="#7ab82a" stroke-width="1.600"/></svg>
<div class="a" style="left:556px;top:729px;width:59px;height:40px;border:1px solid #5f7690;border-bottom:none;border-radius:3px 3px 0 0;background:linear-gradient(rgba(255,255,255,.42),rgba(255,255,255,.12) 50%,rgba(255,255,255,.2));box-shadow:inset 0 0 0 1px rgba(255,255,255,.55)"></div>
<svg class="a" style="left:569px;top:731px" width="32" height="32" viewBox="0 0 32 32"><circle cx="16" cy="16" r="14.500" fill="#e33b2e"/><path d="M16 16 L3.500 8.800 A14.500 14.500 0 0 0 13 30.200 L20.600 20Z" fill="#4bb04f"/><path d="M16 16 L13 30.200 A14.500 14.500 0 0 0 28.500 8.800 L16 8.800Z" fill="#fcd116"/><path d="M3.500 8.800 A14.500 14.500 0 0 1 28.500 8.800 L16 8.800Z" fill="#e33b2e"/><circle cx="16" cy="16" r="6.800" fill="#f4f4f4"/><circle cx="16" cy="16" r="5.400" fill="#3f87d9"/></svg>
<div class="a" style="left:618px;top:729px;width:59px;height:40px;border:1px solid #5f7690;border-bottom:none;border-radius:3px 3px 0 0;background:linear-gradient(rgba(255,255,255,.42),rgba(255,255,255,.12) 50%,rgba(255,255,255,.2));box-shadow:inset 0 0 0 1px rgba(255,255,255,.55)"></div>
<svg class="a" style="left:631px;top:731px" width="32" height="32" viewBox="0 0 32 32"><path d="M2 10 L8 8 L8 26 L2 28Z" fill="#c4c8cc"/><rect x="8" y="4" width="22" height="18" fill="#dfe2e6" stroke="#8a9098" stroke-width=".8"/><rect x="10" y="6" width="18" height="14" fill="#1a2a22"/><path d="M11 16 l2-6 2 8 2-10 2 9 2-5 2 6 2-8 1 6" fill="none" stroke="#3ae05a" stroke-width="1.400"/><path d="M15 22 H23 L24 26 H14Z" fill="#c8ccd0"/><ellipse cx="19" cy="28" rx="8" ry="2.400" fill="#dfe2e6" stroke="#9aa0a8" stroke-width=".5"/></svg>
<div class="a" style="left:680px;top:729px;width:59px;height:40px;border:1px solid #5f7690;border-bottom:none;border-radius:3px 3px 0 0;background:linear-gradient(rgba(255,255,255,.42),rgba(255,255,255,.12) 50%,rgba(255,255,255,.2));box-shadow:inset 0 0 0 1px rgba(255,255,255,.55)"></div>
<svg class="a" style="left:693px;top:731px" width="32" height="32" viewBox="0 0 32 32"><path d="M3 3 H20 L24 7 V30 H3Z" fill="#fbfbf6" stroke="#9a9a92" stroke-width=".8"/><path d="M3.500 14 H23.500 V29.500 H3.500Z" fill="#8ed03a"/><path d="M3.500 14 H23.500 V20 H3.500Z" fill="#dff0b8"/><path d="M5 3 v2 m3-2 v2 m3-2 v2 m3-2 v2 m3-2 v2" stroke="#555" stroke-width="1"/><text x="13" y="20" font-family="Liberation Sans,sans-serif" font-weight="bold" font-size="9" text-anchor="middle" fill="#111">n++</text><path d="M28 2 L31 4 L20 25 L17 27 L17.500 23Z" fill="#f0a81c" stroke="#a06a10" stroke-width=".6"/><path d="M28 2 l3 2 1-3Z" fill="#d8463a"/></svg>
<div class="a" style="left:742px;top:729px;width:59px;height:40px;border:1px solid #5f7690;border-bottom:none;border-radius:3px 3px 0 0;background:linear-gradient(rgba(255,255,255,.42),rgba(255,255,255,.12) 50%,rgba(255,255,255,.2));box-shadow:inset 0 0 0 1px rgba(255,255,255,.55)"></div>
<svg class="a" style="left:755px;top:731px" width="32" height="32" viewBox="0 0 32 32"><path d="M9 4 L27 6 L23 29 L3 25Z" fill="#8fd4e8" stroke="#6aa8c0" stroke-width=".6"/><path d="M9 4 L27 6 L25 16 L6 13Z" fill="#b8e6f4"/><path d="M27 6 L29 9 L25 31 L23 29Z" fill="#e8e8e0"/><path d="M3 25 L23 29 L25 31 L5 27Z" fill="#d8d8d0"/><path d="M10 3 l1 2 m2-1.700 l1 2 m2-1.700 l1 2 m2-1.700 l1 2 m2-1.700 l1 2 m2-1.700 l1 2" stroke="#555" stroke-width="1"/></svg>
<div class="a" style="left:804px;top:729px;width:59px;height:40px;border:1px solid #5f7690;border-bottom:none;border-radius:3px 3px 0 0;background:linear-gradient(rgba(255,255,255,.42),rgba(255,255,255,.12) 50%,rgba(255,255,255,.2));box-shadow:inset 0 0 0 1px rgba(255,255,255,.55)"></div>
<svg class="a" style="left:817px;top:731px" width="32" height="32" viewBox="0 0 32 32"><rect x="0" y="0" width="32" height="32" fill="#c0c0c0"/><rect x="0" y="16" width="32" height="1.600" fill="#111"/><path d="M3 12 C6 8 8 5 10 6 C11 8 8 15 10 15 C12 13 14 5 16 6 C18 7 14 25 13 26" fill="none" stroke="#1010d0" stroke-width="2.400"/><path d="M16 9 C19 5 21 6 20 9 L16 27" fill="none" stroke="#1010d0" stroke-width="2.400"/><path d="M28 4 C27 11 24 18 22 27 C23 31 27 29 29 25" fill="none" stroke="#111" stroke-width="1.500"/><path d="M20 10 C23 7 25 7 24 11 L22 20" fill="none" stroke="#111" stroke-width="1.500"/></svg>
<div class="a" style="left:866px;top:729px;width:59px;height:40px;border:1px solid #5f7690;border-bottom:none;border-radius:3px 3px 0 0;background:linear-gradient(rgba(255,255,255,.42),rgba(255,255,255,.12) 50%,rgba(255,255,255,.2));box-shadow:inset 0 0 0 1px rgba(255,255,255,.55)"></div>
<svg class="a" style="left:879px;top:731px" width="32" height="32" viewBox="0 0 32 32"><defs><linearGradient id="tpA" x1="0" y1="0" x2="0" y2="1"><stop offset="0" stop-color="#2a4fa8"/><stop offset=".6" stop-color="#7fa2dc"/><stop offset=".8" stop-color="#e8eef8"/><stop offset=".86" stop-color="#1a2a58"/><stop offset="1" stop-color="#24386a"/></linearGradient></defs><rect x="2" y="1" width="25" height="30" fill="#f0f0f0" stroke="#9a9a9a" stroke-width=".8"/><rect x="4" y="3" width="21" height="22" fill="url(#tpA)"/><path d="M29 8 L31.500 10.500 L14 25 L11.500 23.500Z" fill="#b0242e"/><path d="M11.500 23.500 L14 25 L9 28Z" fill="#e8e0d0" stroke="#888" stroke-width=".4"/></svg>
<div class="a" style="left:928px;top:729px;width:59px;height:40px;border:1px solid #5f7690;border-bottom:none;border-radius:3px 3px 0 0;background:linear-gradient(rgba(255,255,255,.42),rgba(255,255,255,.12) 50%,rgba(255,255,255,.2));box-shadow:inset 0 0 0 1px rgba(255,255,255,.55)"></div>
<svg class="a" style="left:941px;top:731px" width="32" height="32" viewBox="0 0 32 32"><rect x="1" y="1" width="29" height="29" fill="#111"/><rect x="2" y="2" width="27" height="27" fill="#7ec0e8"/><path d="M2 20 C8 15 14 20 19 16 C23 13 27 15 29 13 V29 H2Z" fill="#5aa848"/><path d="M2 24 C10 20 15 25 29 20 V29 H2Z" fill="#3c8a3a"/><text x="8" y="11.500" font-family="Liberation Sans,sans-serif" font-weight="bold" font-size="9" text-anchor="middle" fill="#111" textLength="12" lengthAdjust="spacingAndGlyphs">TYP</text><circle cx="21" cy="13" r="7" fill="#9cc8e8" stroke="#9aa0a8" stroke-width="1.600"/><path d="M16 11 C19 8 24 9 26 13 C23 15 19 16 16 11Z" fill="#4a9a4a"/><path d="M25 17 C27.500 17.600 29.500 17 31.500 18.400 C31.500 24.500 29 28.500 25 31 C21 28.500 19 24.500 19 19 C21 17.700 23 17.600 25 17Z" fill="#e9b320" stroke="#8a6a12" stroke-width=".6"/><path d="M25 18.500 V29.500 C22 27 20.500 23.500 20.500 23.500 H25Z M25 23.500 H30.500 C31 21.500 31 19.800 31 19.500 C29 18.500 27 18.800 25 18.500Z" fill="#3b7bd4"/></svg>
<div class="t" style="left:1153px;top:738px;font-size:12px;line-height:16px;letter-spacing:-0.6px;color:#eef3f8">RU</div>
<svg class="a" style="left:1184px;top:746px" width="10" height="6" viewBox="0 0 10 6"><path d="M5 .5 L9.500 5.500 H.5Z" fill="#f4f8fc"/></svg>
<svg class="a" style="left:1207px;top:740px" width="14" height="18" viewBox="0 0 14 18"><rect x="4" y=".5" width="6" height="3" rx="1" fill="none" stroke="#fff" stroke-width="1.200"/><rect x="1.500" y="2.500" width="11" height="14.500" rx="2" fill="#8a96a4" stroke="#fff" stroke-width="1.600"/><rect x="3.500" y="11" width="7" height="4" fill="#fff"/></svg>
<svg class="a" style="left:1229px;top:742px" width="17" height="13" viewBox="0 0 17 13"><path d="M0 13V10.500H2.500V13ZM3.400 13V8.500H5.900V13ZM6.800 13V6H9.300V13ZM10.200 13V3.500H12.700V13ZM13.600 13V.5H16.100V13Z" fill="#fff"/></svg>
<svg class="a" style="left:1252px;top:740px" width="18" height="18" viewBox="0 0 18 18"><path d="M1.500 6 H4.500 L9 1.500 V16.500 L4.500 12 H1.500Z" fill="#f4f8fc" stroke="#fff" stroke-width="1"/><path d="M11.500 6 C13 7.500 13 10.500 11.500 12 M13.500 4 C16.500 6.500 16.500 11.500 13.500 14" fill="none" stroke="#e8f0f8" stroke-width="1.300"/></svg>
<div class="t c" style="left:1275px;top:733px;width:77px;font-size:12px;line-height:17px;letter-spacing:-0.4px;color:#fff">20:01<br>14.12.2012</div>
<div class="a" style="left:1352px;top:729px;width:14px;height:39px;border-left:1px solid #5a6c80;background:linear-gradient(135deg,rgba(255,255,255,.1),rgba(255,255,255,.35) 50%,rgba(255,255,255,.12));box-shadow:inset 1px 0 0 rgba(255,255,255,.5)"></div>
</body>
</html>
